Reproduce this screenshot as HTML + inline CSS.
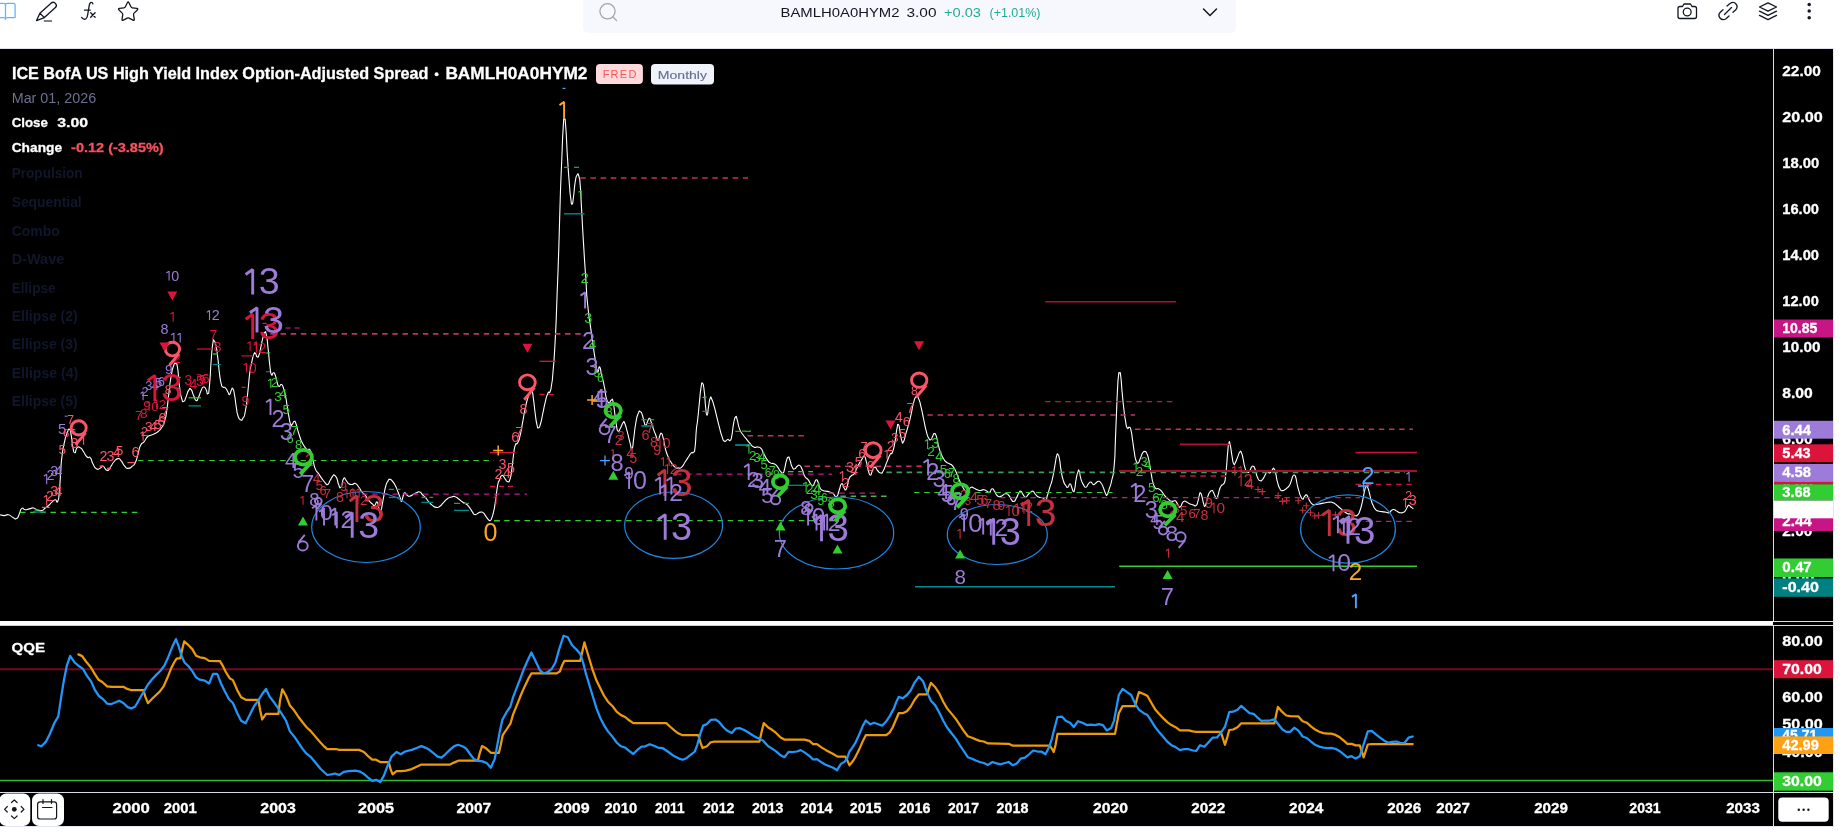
<!DOCTYPE html>
<html lang="en"><head><meta charset="utf-8"><title>BAMLH0A0HYM2 chart</title>
<style>html,body{margin:0;padding:0;background:#fff;overflow:hidden}body{width:1842px;height:836px;font-family:"Liberation Sans",sans-serif}svg{display:block;will-change:transform}</style></head>
<body>
<svg width="1842" height="836" viewBox="0 0 1842 836" font-family="'Liberation Sans', sans-serif">
<rect x="0" y="0" width="1842" height="836" fill="#ffffff"/>
<rect x="0" y="48" width="1833" height="1" fill="#dfe2ee"/>
<rect x="0" y="49" width="1833" height="777" fill="#000000"/>
<path d="M-3,3.4 H3.7 Q5.5,3.4 5.5,5.2 Q5.5,3.4 7.3,3.4 H13.6 Q15.1,3.4 15.1,4.9 V17.5 H7.5 Q5.7,17.6 5.5,19.3 Q5.3,17.6 3.5,17.5 H-3 M5.5,5.2 V19" fill="none" stroke="#5fb3f8" stroke-width="1.25" stroke-linejoin="round"/>
<g fill="none" stroke="#131722" stroke-width="1.3" stroke-linecap="round" stroke-linejoin="round"><path d="M36.6,20.6 L39.9,13.2 L51.3,2.9 Q53.6,1.4 55.6,3.6 Q57.4,5.8 55.4,7.6 L44.4,17.6 Z M39.9,13.2 L44.4,17.6"/></g><path d="M43.8,21 H52" stroke="#787b86" stroke-width="1.9" fill="none"/>
<g fill="none" stroke="#131722" stroke-width="1.3" stroke-linecap="round" stroke-linejoin="round"><path d="M81.6,17.4 Q83.6,20.2 86,18.8 Q87.3,17.8 87.8,14.2 L89.2,5.6 Q89.8,2.2 91.4,2.4 Q92.5,2.5 92.9,3.9 M84.5,10.2 H90.2 M90.7,12.8 L95.1,17.3 M95.1,12.8 L90.7,17.3"/></g>
<path d="M127.37,2.75 Q128.15,1.20 128.93,2.75 L130.93,6.75 Q131.38,7.65 132.38,7.80 L136.80,8.47 Q138.52,8.73 137.28,9.95 L134.10,13.09 Q133.38,13.80 133.55,14.80 L134.27,19.21 Q134.56,20.92 133.02,20.12 L129.05,18.06 Q128.15,17.60 127.25,18.06 L123.28,20.12 Q121.74,20.92 122.03,19.21 L122.75,14.80 Q122.92,13.80 122.20,13.09 L119.02,9.95 Q117.78,8.73 119.50,8.47 L123.92,7.80 Q124.92,7.65 125.37,6.75 Z" fill="none" stroke="#131722" stroke-width="1.3" stroke-linejoin="round"/>
<path d="M583,0 H1236 V27 Q1236,33 1230,33 H589 Q583,33 583,27 Z" fill="#f7f8fd"/>
<circle cx="607.5" cy="11.3" r="7.6" fill="none" stroke="#a3a6af" stroke-width="1.3"/><path d="M613,17 L616.5,20.5" stroke="#a3a6af" stroke-width="1.3" stroke-linecap="round"/>
<text x="780.5" y="17" font-size="13.5" fill="#131722" textLength="119" lengthAdjust="spacingAndGlyphs">BAMLH0A0HYM2</text>
<text x="906.5" y="17" font-size="13.5" fill="#131722" textLength="30" lengthAdjust="spacingAndGlyphs">3.00</text>
<text x="944" y="17" font-size="13.5" fill="#22ab94" textLength="37" lengthAdjust="spacingAndGlyphs">+0.03</text>
<text x="989.5" y="17" font-size="13.5" fill="#22ab94" textLength="51" lengthAdjust="spacingAndGlyphs">(+1.01%)</text>
<path d="M1203.5,9 L1210,15.5 L1216.5,9" fill="none" stroke="#131722" stroke-width="1.5" stroke-linecap="round" stroke-linejoin="round"/>
<g fill="none" stroke="#131722" stroke-width="1.3" stroke-linejoin="round"><path d="M1680,6.5 H1682.5 L1684,4 H1690.5 L1692,6.5 H1694.5 Q1696.5,6.5 1696.5,8.5 V16.5 Q1696.5,18.5 1694.5,18.5 H1680 Q1678,18.5 1678,16.5 V8.5 Q1678,6.5 1680,6.5 Z"/><circle cx="1687.2" cy="12" r="3.9"/></g>
<g fill="none" stroke="#131722" stroke-width="1.3" stroke-linecap="round"><path d="M1727,6 L1730,3.5 Q1733.5,1 1736,4 Q1738.5,7 1735.5,10 L1733,12.2"/><path d="M1729,16 L1726,18.7 Q1722.5,21 1720,18 Q1717.5,15 1720.5,12 L1723,9.8"/><path d="M1724.5,14.5 L1731.5,7.5"/></g>
<g fill="none" stroke="#131722" stroke-width="1.3" stroke-linejoin="round" stroke-linecap="round"><path d="M1768,2.8 L1776.5,7 L1768,11.2 L1759.5,7 Z"/><path d="M1759.5,11.2 L1768,15.4 L1776.5,11.2"/><path d="M1759.5,15.4 L1768,19.6 L1776.5,15.4"/></g>
<circle cx="1809.2" cy="4.6" r="1.75" fill="#131722"/>
<circle cx="1809.2" cy="11.1" r="1.75" fill="#131722"/>
<circle cx="1809.2" cy="17.7" r="1.75" fill="#131722"/>
<path d="M0.0,514.7C1.4,515.0 1.4,515.6 4.2,515.6C7.0,515.6 5.6,514.2 8.4,514.7C11.2,515.2 9.8,515.9 12.6,517.2C15.4,518.5 14.5,519.7 16.7,518.6C18.9,517.5 17.6,517.3 19.3,513.9C21.0,510.5 19.9,509.8 21.8,508.4C23.7,507.0 22.6,509.5 25.1,509.7C27.6,509.9 26.5,509.5 29.3,508.9C32.1,508.3 30.7,507.6 33.5,508.0C36.3,508.4 34.9,509.4 37.7,510.2C40.5,511.0 39.4,511.2 41.9,510.5C44.4,509.8 43.0,509.7 45.2,508.0C47.4,506.3 46.4,507.4 48.6,505.5C50.8,503.6 49.7,504.1 51.9,502.2C54.1,500.3 53.2,500.0 55.2,499.7C57.2,499.4 56.4,504.4 57.8,501.3C59.2,498.2 58.5,499.7 59.4,490.5C60.3,481.3 59.8,484.9 60.6,473.7C61.4,462.5 60.6,467.6 61.9,457.0C63.2,446.4 62.8,449.7 64.5,441.9C66.2,434.1 65.3,437.7 67.0,433.5C68.7,429.3 68.1,428.7 69.5,429.3C70.9,429.9 70.1,429.3 71.2,435.2C72.3,441.1 71.6,441.0 72.8,446.9C74.0,452.8 73.4,452.5 74.8,452.8C76.2,453.1 75.1,449.5 77.0,447.8C78.9,446.1 78.2,446.4 80.4,447.8C82.6,449.2 81.5,448.9 83.7,452.0C85.9,455.1 84.9,455.1 87.1,457.0C89.3,458.9 88.5,455.6 90.4,457.8C92.3,460.0 90.9,460.1 92.9,463.7C94.9,467.3 93.8,467.3 96.3,468.7C98.8,470.1 98.3,468.7 100.5,467.9C102.7,467.1 100.8,465.4 103.0,466.2C105.2,467.0 104.6,470.1 107.1,470.4C109.6,470.7 108.3,469.8 110.5,467.0C112.7,464.2 111.3,464.8 113.8,462.0C116.3,459.2 115.5,458.9 118.0,458.6C120.5,458.3 119.2,458.7 121.4,461.2C123.6,463.7 122.5,463.8 124.7,466.2C126.9,468.6 125.6,468.4 128.1,468.4C130.6,468.4 129.8,468.3 132.3,466.2C134.8,464.1 133.7,466.2 135.6,462.0C137.5,457.8 136.4,459.2 138.1,453.6C139.8,448.0 138.6,449.1 140.6,445.2C142.6,441.3 141.8,444.6 144.0,441.9C146.2,439.2 145.1,439.2 147.3,437.0C149.5,434.8 148.5,436.2 150.7,435.2C152.9,434.2 151.5,435.2 154.0,434.0C156.5,432.8 155.5,433.8 158.2,431.5C160.9,429.2 159.9,430.3 162.0,427.0C164.1,423.7 162.9,427.0 164.5,421.5C166.1,416.0 165.4,419.8 166.8,410.5C168.2,401.2 167.4,404.9 168.8,393.7C170.2,382.5 169.4,386.2 171.0,377.0C172.6,367.8 171.9,370.6 173.5,366.1C175.1,361.6 174.3,362.8 175.7,363.6C177.1,364.4 176.5,361.4 177.7,368.6C178.9,375.8 178.0,375.5 179.3,385.3C180.6,395.1 180.0,392.6 181.5,397.9C183.0,403.2 182.4,401.5 183.9,401.2C185.4,400.9 184.4,400.7 186.0,397.1C187.6,393.5 186.9,392.9 188.6,390.4C190.3,387.9 189.4,387.8 191.1,389.5C192.8,391.2 191.9,391.8 193.6,395.4C195.3,399.0 194.4,399.8 196.1,400.4C197.8,401.0 196.9,400.4 198.6,397.1C200.3,393.8 199.4,393.8 201.1,390.4C202.8,387.0 201.9,387.3 203.6,387.0C205.3,386.7 204.7,387.3 206.1,389.5C207.5,391.7 206.7,395.1 207.8,393.7C208.9,392.3 208.4,396.5 209.5,385.3C210.6,374.1 210.1,374.1 211.2,360.2C212.3,346.3 211.8,349.9 212.8,343.5C213.8,337.1 213.1,339.9 214.2,341.0C215.3,342.1 215.0,340.9 216.2,346.8C217.4,352.7 216.8,349.7 217.9,358.6C219.0,367.5 218.4,365.2 219.5,373.6C220.6,382.0 220.1,379.2 221.2,383.7C222.3,388.2 221.5,385.6 222.9,387.0C224.3,388.4 223.7,386.2 225.4,387.9C227.1,389.6 226.5,389.8 227.9,392.0C229.3,394.2 228.5,395.0 229.6,394.5C230.7,394.0 230.1,392.3 231.2,390.4C232.3,388.5 231.8,387.0 232.9,388.7C234.0,390.4 233.5,389.3 234.6,395.4C235.7,401.5 235.2,400.4 236.3,407.1C237.4,413.8 236.5,411.3 237.9,415.5C239.3,419.7 238.8,418.9 240.5,419.7C242.2,420.5 241.3,421.1 243.0,418.0C244.7,414.9 243.8,419.7 245.5,410.5C247.2,401.3 246.6,402.7 248.0,390.4C249.4,378.1 248.4,383.1 249.7,373.6C251.0,364.1 250.4,368.3 251.8,361.9C253.2,355.5 252.6,357.2 253.8,354.4C255.0,351.6 254.4,352.7 255.5,353.5C256.6,354.3 256.0,356.6 257.2,356.9C258.4,357.2 258.0,357.8 259.2,354.4C260.4,351.0 259.6,352.7 260.9,346.8C262.2,340.9 261.8,341.5 263.1,336.8C264.4,332.1 263.6,333.2 264.7,332.6C265.8,332.0 265.3,329.8 266.4,335.1C267.5,340.4 267.0,338.5 268.1,348.5C269.2,358.5 268.7,356.5 269.8,365.2C270.9,373.9 270.2,372.0 271.4,374.5C272.6,377.0 272.1,372.5 273.4,372.8C274.7,373.1 274.1,372.2 275.3,375.3C276.5,378.4 275.8,378.4 277.0,382.0C278.2,385.6 277.5,385.4 279.0,386.2C280.5,387.0 280.0,383.7 281.5,384.5C283.0,385.3 282.2,384.5 283.6,388.7C285.0,392.9 284.5,391.0 285.7,397.1C286.9,403.2 286.2,400.4 287.3,407.1C288.4,413.8 287.9,411.3 289.0,417.1C290.1,422.9 289.6,422.2 290.7,424.5C291.8,426.8 291.3,425.0 292.4,424.0C293.5,423.0 292.9,421.8 294.0,421.5C295.1,421.2 294.6,420.5 295.7,423.0C296.8,425.5 296.0,424.2 297.4,428.9C298.8,433.6 298.2,432.2 299.9,437.0C301.6,441.8 300.3,439.3 302.6,443.4C304.9,447.5 304.3,447.1 306.8,449.3C309.3,451.5 308.2,447.0 310.1,450.1C312.0,453.2 310.9,452.3 312.6,458.5C314.3,464.7 313.2,463.6 315.2,468.6C317.2,473.6 316.3,470.3 318.5,473.6C320.7,476.9 319.7,475.5 321.9,478.6C324.1,481.7 323.3,480.8 325.2,482.8C327.1,484.8 326.0,485.3 327.7,484.5C329.4,483.7 328.5,483.1 330.2,480.3C331.9,477.5 331.3,477.8 332.7,476.1C334.1,474.4 333.0,474.4 334.4,475.2C335.8,476.0 335.5,475.5 336.9,478.6C338.3,481.7 337.2,481.7 338.6,484.5C340.0,487.3 339.4,489.0 341.1,487.0C342.8,485.0 341.9,480.8 343.6,478.6C345.3,476.4 344.4,478.6 346.1,480.3C347.8,482.0 346.6,482.2 348.6,483.6C350.6,485.0 349.8,484.5 352.0,484.5C354.2,484.5 353.1,482.8 355.3,483.6C357.5,484.4 356.5,484.2 358.7,487.0C360.9,489.8 359.8,489.2 362.0,492.0C364.2,494.8 363.2,492.5 365.4,495.3C367.6,498.1 366.5,497.6 368.7,500.4C370.9,503.2 370.1,502.0 372.1,503.7C374.1,505.4 372.9,506.0 374.6,505.4C376.3,504.8 375.7,501.2 377.1,502.0C378.5,502.8 377.7,504.5 378.8,507.9C379.9,511.3 379.1,514.6 380.5,512.1C381.9,509.6 381.3,508.8 383.0,500.4C384.7,492.0 383.8,493.4 385.5,487.0C387.2,480.6 386.5,483.6 388.0,481.1C389.5,478.6 388.3,479.1 390.0,479.4C391.7,479.7 391.2,479.7 393.0,481.9C394.8,484.1 393.8,482.7 395.5,486.1C397.2,489.5 396.3,487.8 398.0,492.0C399.7,496.2 399.3,495.6 400.5,498.7C401.7,501.8 400.8,502.0 401.7,501.2C402.6,500.4 402.1,499.0 403.1,496.2C404.1,493.4 403.3,493.1 404.7,492.8C406.1,492.5 405.5,494.2 407.2,495.3C408.9,496.4 407.7,496.5 409.7,496.2C411.7,495.9 410.9,495.6 413.1,494.5C415.3,493.4 414.2,493.6 416.4,492.8C418.6,492.0 417.8,491.4 419.8,492.0C421.8,492.6 420.3,492.5 422.3,494.5C424.3,496.5 423.5,495.4 425.7,497.9C427.9,500.4 426.8,499.5 429.0,502.0C431.2,504.5 429.9,503.6 432.4,505.4C434.9,507.2 434.0,507.1 436.5,507.4C439.0,507.7 437.7,507.7 439.9,506.2C442.1,504.7 440.7,505.4 443.2,502.9C445.7,500.4 444.6,500.7 447.4,498.7C450.2,496.7 449.1,497.7 451.6,497.0C454.1,496.3 452.8,496.1 455.0,496.7C457.2,497.3 455.8,496.9 458.3,498.7C460.8,500.5 460.0,500.3 462.5,502.0C465.0,503.7 463.6,502.0 465.8,503.7C468.0,505.4 467.0,504.3 469.2,507.1C471.4,509.9 470.6,509.6 472.5,512.1C474.4,514.6 473.0,514.3 475.0,514.6C477.0,514.9 476.4,513.7 478.4,512.9C480.4,512.1 479.2,512.1 480.9,512.1C482.6,512.1 481.7,511.5 483.4,512.9C485.1,514.3 484.2,514.1 485.9,516.3C487.6,518.5 487.0,518.2 488.4,519.6C489.8,521.0 489.0,521.1 490.1,520.5C491.2,519.9 490.7,520.7 491.8,517.9C492.9,515.1 492.4,516.8 493.5,512.1C494.6,507.4 494.1,510.1 495.1,503.7C496.1,497.3 495.5,499.7 496.5,493.0C497.5,486.3 497.1,487.8 498.0,483.6C498.9,479.4 498.0,483.2 499.3,480.5C500.6,477.8 499.9,476.0 501.8,475.4C503.7,474.8 503.2,476.7 505.1,478.8C507.0,480.9 505.9,481.6 507.6,481.6C509.3,481.6 508.6,483.6 510.1,478.8C511.6,474.0 511.0,474.9 512.1,467.1C513.2,459.3 512.5,462.6 513.5,455.3C514.5,448.0 513.8,449.5 515.2,445.3C516.6,441.1 516.0,446.2 517.7,442.8C519.4,439.4 518.5,442.2 520.2,435.2C521.9,428.2 521.0,430.8 522.7,421.9C524.4,413.0 523.5,416.3 525.2,408.5C526.9,400.7 526.0,404.0 527.7,398.4C529.4,392.8 528.8,394.5 530.2,391.7C531.6,388.9 530.8,387.2 531.9,390.0C533.0,392.8 532.5,392.3 533.6,400.1C534.7,407.9 534.1,405.4 535.2,413.5C536.3,421.6 535.8,419.7 536.9,424.4C538.0,429.1 537.4,428.0 538.6,427.7C539.8,427.4 539.2,428.2 540.6,423.5C542.0,418.8 541.2,420.7 542.8,413.5C544.4,406.3 543.6,408.5 545.3,401.8C547.0,395.1 546.2,396.8 547.8,393.4C549.4,390.0 548.7,394.8 550.0,391.7C551.3,388.6 550.7,390.6 551.7,384.0C552.7,377.4 551.8,386.6 553.0,372.0C554.2,357.4 553.8,366.2 555.2,340.3C556.6,314.4 555.9,326.2 557.1,294.4C558.3,262.6 557.9,276.5 558.9,245.0C559.9,213.5 559.3,227.6 560.2,199.8C561.1,172.0 560.7,185.2 561.7,161.6C562.7,138.0 562.2,143.2 563.1,129.0C564.0,114.8 563.5,119.1 564.4,119.1C565.3,119.1 564.9,116.1 565.9,129.0C566.9,141.9 566.3,139.2 567.5,157.7C568.7,176.2 568.3,171.1 569.4,184.5C570.5,197.9 569.8,191.4 570.7,197.9C571.6,204.4 571.1,204.6 572.1,204.0C573.1,203.4 572.6,203.1 573.6,196.0C574.6,188.9 574.0,189.5 575.1,182.6C576.2,175.7 575.7,177.3 577.0,175.3C578.3,173.3 577.8,172.8 578.9,176.5C580.0,180.2 579.4,175.4 580.3,186.4C581.2,197.4 580.6,192.2 581.6,209.4C582.6,226.6 581.8,214.9 583.2,238.1C584.6,261.3 584.3,256.4 585.8,279.0C587.3,301.6 586.1,289.2 587.8,305.8C589.5,322.4 588.5,312.2 590.8,328.8C593.1,345.4 592.4,341.6 594.6,355.6C596.8,369.6 595.6,367.1 597.3,370.9C599.0,374.7 598.2,365.7 599.6,367.0C601.0,368.3 600.3,370.0 601.5,374.7C602.7,379.4 602.0,376.4 603.1,381.0C604.2,385.6 603.6,382.6 604.7,388.4C605.8,394.2 605.0,393.7 606.4,398.4C607.8,403.1 607.2,402.0 608.9,402.6C610.6,403.2 610.0,400.4 611.4,400.1C612.8,399.8 612.0,397.3 613.1,401.8C614.2,406.3 613.7,405.7 614.8,413.5C615.9,421.3 615.3,419.3 616.4,425.2C617.5,431.1 616.7,430.3 618.1,431.1C619.5,431.9 618.9,430.5 620.6,427.7C622.3,424.9 621.7,424.1 623.1,422.7C624.5,421.3 623.4,420.4 624.8,423.5C626.2,426.6 625.6,425.8 627.3,431.9C629.0,438.0 628.2,436.3 629.8,441.9C631.4,447.5 630.7,449.7 632.0,448.6C633.3,447.5 632.5,447.0 633.7,438.6C634.9,430.2 634.2,431.9 635.7,423.5C637.2,415.1 636.6,417.4 638.2,413.5C639.8,409.6 639.0,411.2 640.4,411.8C641.8,412.4 641.2,411.8 642.4,415.2C643.6,418.6 643.0,418.6 644.1,421.9C645.2,425.2 644.6,425.2 645.7,425.2C646.8,425.2 646.3,424.1 647.4,421.9C648.5,419.7 648.0,418.8 649.1,418.5C650.2,418.2 649.4,417.6 650.8,421.0C652.2,424.4 651.6,423.9 653.3,428.6C655.0,433.3 654.2,431.3 655.8,435.2C657.4,439.1 656.6,440.3 658.0,440.3C659.4,440.3 658.8,437.4 660.0,435.2C661.2,433.0 660.5,432.5 661.6,433.6C662.7,434.7 662.2,434.1 663.3,438.6C664.4,443.1 663.6,441.4 665.0,447.0C666.4,452.6 665.5,450.3 667.5,455.3C669.5,460.3 668.4,458.1 670.9,462.0C673.4,465.9 672.5,465.1 675.0,467.1C677.5,469.1 676.2,467.9 678.4,467.9C680.6,467.9 679.5,469.1 681.7,467.1C683.9,465.1 682.9,465.4 685.1,462.0C687.3,458.6 686.3,460.1 688.4,457.0C690.5,453.9 689.6,454.4 691.3,452.8C693.0,451.2 692.2,454.2 693.5,452.3C694.8,450.4 694.2,454.4 695.1,447.0C696.0,439.6 695.5,439.1 696.3,430.2C697.1,421.3 696.6,429.1 697.6,420.2C698.6,411.3 698.2,414.1 699.3,403.5C700.4,392.9 699.8,395.1 700.9,388.4C702.0,381.7 701.5,382.3 702.6,383.4C703.7,384.5 703.3,384.0 704.3,391.8C705.3,399.6 704.7,399.0 705.6,406.8C706.5,414.6 706.1,415.2 707.1,415.2C708.1,415.2 707.5,412.4 708.5,406.8C709.5,401.2 709.0,401.0 710.1,398.5C711.2,396.0 710.4,396.5 711.8,399.3C713.2,402.1 712.6,400.9 714.3,406.8C716.0,412.7 715.1,410.2 716.8,416.9C718.5,423.6 717.6,420.5 719.3,426.9C721.0,433.3 720.2,431.3 721.9,436.1C723.6,440.9 722.5,440.1 724.4,441.2C726.3,442.3 725.8,439.8 727.7,439.5C729.6,439.2 728.8,441.7 730.2,440.3C731.6,438.9 730.8,440.9 731.9,435.3C733.0,429.7 732.4,429.7 733.6,423.6C734.8,417.5 734.4,418.0 735.6,416.9C736.8,415.8 736.0,416.3 737.3,420.2C738.6,424.1 737.6,423.8 739.4,428.6C741.2,433.4 740.6,431.2 742.8,434.5C745.0,437.8 743.9,435.8 746.1,438.6C748.3,441.4 747.0,440.0 749.5,442.8C752.0,445.6 750.9,445.6 753.7,447.0C756.5,448.4 755.4,446.4 757.9,447.0C760.4,447.6 759.3,446.5 761.2,448.7C763.1,450.9 761.7,450.1 763.7,453.7C765.7,457.3 764.9,456.5 767.1,459.6C769.3,462.7 768.2,461.5 770.4,462.9C772.6,464.3 771.6,462.7 773.8,463.8C776.0,464.9 774.9,463.8 777.1,466.3C779.3,468.8 778.5,469.1 780.5,471.3C782.5,473.5 781.6,473.8 783.0,473.0C784.4,472.2 783.5,472.7 784.6,468.8C785.7,464.9 785.1,465.1 786.3,461.2C787.5,457.3 787.1,457.4 788.3,457.1C789.5,456.8 788.7,457.1 790.0,460.4C791.3,463.7 790.6,464.3 792.2,467.1C793.8,469.9 793.0,469.1 794.7,468.8C796.4,468.5 795.5,467.4 797.2,466.3C798.9,465.2 798.0,464.3 799.7,465.4C801.4,466.5 800.5,466.0 802.2,469.6C803.9,473.2 802.7,472.9 804.7,476.3C806.7,479.7 806.1,477.2 808.1,479.7C810.1,482.2 808.9,481.9 810.6,483.8C812.3,485.7 811.7,486.0 813.1,485.5C814.5,485.0 813.7,484.1 814.8,482.2C815.9,480.3 815.3,479.7 816.4,479.7C817.5,479.7 817.0,479.7 818.1,482.2C819.2,484.7 818.4,484.5 819.8,487.2C821.2,489.9 819.8,488.8 822.3,490.2C824.8,491.6 823.9,490.4 827.3,491.4C830.7,492.4 829.3,491.4 832.4,493.1C835.5,494.8 834.3,497.3 836.5,496.4C838.7,495.5 837.4,494.7 839.1,490.5C840.8,486.3 839.9,484.6 841.6,483.8C843.3,483.0 842.7,486.0 844.1,488.0C845.5,490.0 844.6,490.5 845.7,489.7C846.8,488.9 846.3,489.1 847.4,485.5C848.5,481.9 847.7,482.1 849.1,478.8C850.5,475.5 849.9,477.2 851.6,475.5C853.3,473.8 852.4,476.0 854.1,473.8C855.8,471.6 854.9,472.1 856.6,468.8C858.3,465.5 857.4,466.9 859.1,463.8C860.8,460.7 860.0,462.1 861.7,459.6C863.4,457.1 862.7,455.7 864.2,456.2C865.7,456.7 864.8,456.4 866.2,461.2C867.6,466.0 866.9,465.9 868.3,470.5C869.7,475.1 869.0,475.1 870.4,475.1C871.8,475.1 871.0,473.2 872.5,470.5C874.0,467.8 873.3,467.1 875.0,467.1C876.7,467.1 875.6,468.5 877.6,470.5C879.6,472.5 879.0,473.0 880.9,473.0C882.8,473.0 881.4,474.1 883.4,470.5C885.4,466.9 884.6,467.4 886.8,462.1C889.0,456.8 888.2,457.9 890.1,454.5C892.0,451.1 890.9,456.2 892.5,452.0C894.1,447.8 893.6,449.2 895.0,441.9C896.4,434.6 895.6,436.0 896.7,430.2C897.8,424.4 897.3,423.8 898.4,424.4C899.5,425.0 898.9,426.6 900.0,431.9C901.1,437.2 900.6,437.0 901.7,440.3C902.8,443.6 902.0,444.1 903.4,441.9C904.8,439.7 904.2,439.2 905.9,433.6C907.6,428.0 906.7,431.3 908.4,425.2C910.1,419.1 909.2,422.5 910.9,415.2C912.6,407.9 911.7,409.6 913.4,403.4C915.1,397.2 914.3,398.4 916.0,396.7C917.7,395.0 916.8,395.0 918.5,398.4C920.2,401.8 919.3,400.1 921.0,406.8C922.7,413.5 921.8,410.7 923.5,418.5C925.2,426.3 924.3,423.8 926.0,430.2C927.7,436.6 926.8,434.7 928.5,437.8C930.2,440.9 929.6,440.0 931.0,439.4C932.4,438.8 931.6,438.0 932.7,436.1C933.8,434.2 933.1,433.3 934.4,433.6C935.7,433.9 935.1,432.7 936.5,436.9C937.9,441.1 937.1,440.5 938.6,446.1C940.1,451.7 939.4,449.5 941.1,453.7C942.8,457.9 941.9,455.9 943.6,458.7C945.3,461.5 944.2,460.3 946.1,462.0C948.0,463.7 947.2,462.3 949.4,463.7C951.6,465.1 950.6,463.4 952.8,466.2C955.0,469.0 953.9,467.3 956.1,472.1C958.3,476.9 957.3,475.5 959.5,480.5C961.7,485.5 960.6,483.6 962.8,487.2C965.0,490.8 964.2,490.5 966.2,491.3C968.2,492.1 967.0,491.1 968.7,489.7C970.4,488.3 969.5,487.8 971.2,487.2C972.9,486.6 971.7,487.2 973.7,488.0C975.7,488.8 974.9,488.9 977.1,489.7C979.3,490.5 978.2,490.5 980.4,490.5C982.6,490.5 981.6,489.4 983.8,489.7C986.0,490.0 985.2,490.5 987.1,491.3C989.0,492.1 987.9,493.0 989.6,492.2C991.3,491.4 990.4,489.1 992.1,488.8C993.8,488.5 992.9,489.1 994.6,491.3C996.3,493.5 995.1,493.8 997.1,495.5C999.1,497.2 997.7,497.0 1000.5,496.4C1003.3,495.8 1002.7,494.1 1005.5,493.8C1008.3,493.5 1006.9,493.5 1008.9,495.5C1010.9,497.5 1009.7,497.7 1011.4,499.7C1013.1,501.7 1012.2,502.0 1013.9,501.4C1015.6,500.8 1014.7,500.8 1016.4,498.0C1018.1,495.2 1017.4,495.2 1018.9,493.0C1020.4,490.8 1019.5,490.7 1020.9,491.3C1022.3,491.9 1021.5,492.7 1023.1,494.7C1024.7,496.7 1023.9,497.2 1025.6,497.2C1027.3,497.2 1026.4,496.4 1028.1,494.7C1029.8,493.0 1028.9,493.3 1030.6,492.2C1032.3,491.1 1031.4,490.5 1033.1,491.3C1034.8,492.1 1033.7,492.7 1035.7,494.7C1037.7,496.7 1036.8,496.2 1039.0,497.2C1041.2,498.2 1040.2,496.9 1042.4,497.7C1044.6,498.5 1044.0,500.4 1045.7,499.7C1047.4,499.0 1046.0,499.7 1047.4,495.5C1048.8,491.3 1048.2,492.8 1049.9,487.2C1051.6,481.6 1050.7,486.1 1052.4,478.8C1054.1,471.5 1053.5,472.9 1054.9,465.4C1056.3,457.9 1055.6,459.8 1056.6,456.2C1057.6,452.6 1057.0,453.7 1057.9,454.5C1058.8,455.3 1058.3,453.4 1059.4,458.7C1060.5,464.0 1059.8,463.1 1061.1,470.4C1062.4,477.7 1061.7,475.5 1063.3,480.5C1064.9,485.5 1064.3,483.3 1065.8,485.5C1067.3,487.7 1066.4,487.8 1067.8,487.2C1069.2,486.6 1068.7,483.8 1070.0,483.8C1071.3,483.8 1070.6,484.7 1071.7,487.2C1072.8,489.7 1072.3,490.8 1073.3,491.3C1074.3,491.8 1073.7,493.0 1074.7,488.8C1075.7,484.6 1075.1,484.4 1076.2,478.8C1077.3,473.2 1076.9,474.6 1077.9,472.1C1078.9,469.6 1078.2,469.0 1079.2,471.2C1080.2,473.4 1079.5,474.3 1080.9,478.8C1082.3,483.3 1081.7,481.8 1083.4,484.6C1085.1,487.4 1084.2,487.5 1085.9,487.2C1087.6,486.9 1086.7,485.5 1088.4,483.8C1090.1,482.1 1089.2,481.8 1090.9,482.1C1092.6,482.4 1091.7,484.3 1093.4,484.6C1095.1,484.9 1094.2,484.1 1095.9,483.0C1097.6,481.9 1096.7,481.3 1098.4,481.3C1100.1,481.3 1099.3,480.8 1101.0,483.0C1102.7,485.2 1102.0,484.5 1103.5,488.0C1105.0,491.5 1104.3,491.3 1105.5,493.5C1106.7,495.7 1106.0,496.2 1107.2,494.7C1108.4,493.2 1107.7,493.6 1109.2,488.9C1110.7,484.2 1110.0,488.3 1111.7,480.5C1113.4,472.7 1113.0,478.9 1114.2,465.5C1115.4,452.1 1114.7,457.1 1115.4,440.3C1116.1,423.5 1115.7,431.4 1116.4,415.2C1117.1,399.0 1116.7,404.6 1117.4,391.8C1118.1,379.0 1117.7,383.0 1118.4,376.7C1119.1,370.4 1118.8,373.0 1119.6,373.0C1120.4,373.0 1120.0,370.4 1120.8,376.7C1121.6,383.0 1121.1,381.2 1122.1,391.8C1123.1,402.4 1122.7,399.0 1123.8,408.5C1124.9,418.0 1124.3,413.8 1125.4,420.2C1126.5,426.6 1125.8,425.4 1127.1,427.8C1128.4,430.2 1128.0,426.5 1129.3,427.3C1130.6,428.1 1129.9,426.0 1131.0,430.3C1132.1,434.6 1131.5,433.0 1132.6,440.3C1133.7,447.6 1133.2,445.4 1134.3,452.1C1135.4,458.8 1134.7,456.8 1136.0,460.4C1137.3,464.0 1136.8,463.4 1138.2,462.9C1139.6,462.4 1138.7,462.1 1140.2,458.8C1141.7,455.5 1141.1,455.3 1142.7,452.9C1144.3,450.5 1143.5,451.3 1144.9,451.6C1146.3,451.9 1145.6,450.8 1146.9,453.7C1148.2,456.6 1147.8,455.5 1148.9,460.4C1150.0,465.3 1149.4,463.5 1150.3,468.5C1151.2,473.5 1150.6,470.7 1151.5,475.4C1152.4,480.1 1151.7,478.5 1153.0,482.7C1154.3,486.9 1153.6,486.1 1155.4,488.1C1157.2,490.1 1156.4,487.7 1158.4,488.7C1160.4,489.7 1159.4,488.9 1161.4,491.1C1163.4,493.3 1162.2,492.7 1164.4,495.3C1166.6,497.9 1165.6,496.9 1168.0,498.9C1170.4,500.9 1169.3,500.7 1171.5,501.3C1173.7,501.9 1172.9,500.5 1174.5,500.7C1176.1,500.9 1174.9,500.1 1176.3,501.9C1177.7,503.7 1177.3,504.5 1178.7,506.1C1180.1,507.7 1179.3,507.7 1180.5,506.7C1181.7,505.7 1181.1,504.9 1182.3,503.1C1183.5,501.3 1182.7,501.7 1184.1,501.3C1185.5,500.9 1184.7,501.1 1186.5,501.9C1188.3,502.7 1187.3,502.7 1189.5,503.7C1191.7,504.7 1190.9,504.3 1193.1,504.9C1195.3,505.5 1194.5,506.7 1196.1,505.5C1197.7,504.3 1196.8,504.7 1197.9,501.3C1199.0,497.9 1198.4,498.1 1199.3,495.3C1200.2,492.5 1199.6,492.3 1200.5,492.9C1201.4,493.5 1201.1,493.5 1202.1,497.1C1203.1,500.7 1202.6,500.7 1203.6,503.7C1204.6,506.7 1204.0,506.7 1205.0,506.1C1206.0,505.5 1205.5,505.3 1206.5,501.9C1207.5,498.5 1206.9,499.1 1208.0,495.9C1209.1,492.7 1208.5,494.1 1209.8,492.3C1211.1,490.5 1210.8,490.5 1212.0,490.5C1213.2,490.5 1212.3,490.3 1213.4,492.3C1214.5,494.3 1214.1,494.5 1215.2,496.5C1216.3,498.5 1215.8,498.9 1216.8,498.3C1217.8,497.7 1217.3,497.5 1218.2,494.7C1219.1,491.9 1218.4,492.9 1219.4,489.9C1220.4,486.9 1220.0,487.5 1221.2,485.7C1222.4,483.9 1221.8,485.9 1223.0,484.5C1224.2,483.1 1223.9,484.5 1224.8,481.5C1225.7,478.5 1225.0,480.8 1225.6,475.6C1226.2,470.4 1225.9,473.8 1226.6,466.0C1227.3,458.2 1226.9,459.8 1227.7,452.1C1228.5,444.4 1228.0,445.1 1228.9,442.9C1229.8,440.7 1229.3,441.2 1230.3,445.4C1231.3,449.6 1230.8,449.3 1231.9,455.4C1233.0,461.5 1232.4,461.6 1233.6,463.8C1234.8,466.0 1234.3,464.3 1235.6,462.1C1236.9,459.9 1236.2,460.4 1237.6,457.1C1239.0,453.8 1238.5,453.5 1239.8,452.1C1241.1,450.7 1240.4,450.7 1241.5,452.9C1242.6,455.1 1242.0,454.1 1243.1,458.8C1244.2,463.5 1243.4,462.7 1244.8,467.1C1246.2,471.5 1245.6,471.0 1247.3,472.1C1249.0,473.2 1248.4,472.2 1249.8,470.5C1251.2,468.8 1250.4,468.5 1251.5,467.1C1252.6,465.7 1252.1,465.7 1253.2,466.3C1254.3,466.9 1253.5,465.2 1254.9,468.8C1256.3,472.4 1255.7,473.3 1257.4,477.2C1259.1,481.1 1258.2,479.7 1259.9,480.5C1261.6,481.3 1260.7,481.4 1262.4,479.7C1264.1,478.0 1263.2,478.3 1264.9,475.5C1266.6,472.7 1265.7,472.1 1267.4,471.3C1269.1,470.5 1268.2,473.6 1269.9,473.0C1271.6,472.4 1271.0,471.0 1272.4,469.6C1273.8,468.2 1273.0,467.4 1274.1,468.8C1275.2,470.2 1274.7,469.3 1275.8,473.8C1276.9,478.3 1276.1,477.2 1277.5,482.2C1278.9,487.2 1278.3,486.1 1280.0,488.9C1281.7,491.7 1280.8,490.4 1282.5,490.6C1284.2,490.8 1283.4,490.5 1285.0,489.5C1286.6,488.5 1285.8,489.3 1287.4,487.7C1289.0,486.1 1288.4,487.3 1289.8,484.7C1291.2,482.1 1290.6,482.7 1291.6,479.9C1292.6,477.1 1291.9,477.9 1292.8,476.3C1293.7,474.7 1293.3,474.7 1294.3,475.1C1295.3,475.5 1294.9,474.7 1295.8,477.5C1296.7,480.3 1296.0,479.1 1297.0,483.5C1298.0,487.9 1297.6,486.5 1298.8,490.7C1300.0,494.9 1299.3,493.3 1300.6,496.1C1301.9,498.9 1301.4,498.9 1302.7,499.1C1304.0,499.3 1303.2,498.1 1304.4,496.7C1305.6,495.3 1305.1,494.7 1306.3,494.9C1307.5,495.1 1306.7,495.1 1308.0,497.3C1309.3,499.5 1308.4,499.1 1310.1,501.5C1311.8,503.9 1311.1,503.4 1313.1,504.4C1315.1,505.4 1313.5,504.7 1316.1,504.4C1318.7,504.1 1317.7,504.2 1320.9,503.6C1324.1,503.0 1322.7,503.2 1325.7,502.7C1328.7,502.2 1327.5,502.1 1329.9,502.1C1332.3,502.1 1330.7,501.7 1332.9,502.7C1335.1,503.7 1334.1,503.2 1336.5,505.0C1338.9,506.8 1337.6,506.0 1340.0,508.0C1342.4,510.0 1341.2,509.2 1343.6,511.0C1346.0,512.8 1345.0,512.4 1347.2,513.4C1349.4,514.4 1348.2,513.6 1350.2,514.0C1352.2,514.4 1351.4,514.0 1353.2,514.6C1355.0,515.2 1354.0,515.8 1355.6,515.8C1357.2,515.8 1356.6,516.2 1358.0,514.6C1359.4,513.0 1358.6,514.2 1359.8,511.0C1361.0,507.8 1360.4,509.8 1361.6,505.0C1362.8,500.2 1362.3,501.9 1363.4,496.7C1364.5,491.5 1363.9,492.9 1364.9,489.5C1365.9,486.1 1365.4,487.1 1366.4,486.5C1367.4,485.9 1366.8,485.5 1367.8,487.7C1368.8,489.9 1368.3,488.9 1369.4,493.1C1370.5,497.3 1370.0,496.3 1371.2,500.3C1372.4,504.3 1371.6,502.0 1373.0,505.0C1374.4,508.0 1373.5,507.2 1375.3,509.2C1377.1,511.2 1376.1,510.2 1378.3,511.0C1380.5,511.8 1379.3,511.2 1381.9,511.6C1384.5,512.0 1383.7,511.8 1386.1,512.2C1388.5,512.6 1387.5,513.2 1389.1,512.8C1390.7,512.4 1389.5,512.1 1390.9,511.0C1392.3,509.9 1391.7,509.7 1393.3,509.5C1394.9,509.3 1394.1,509.6 1395.7,510.4C1397.3,511.2 1396.5,511.2 1398.1,512.0C1399.7,512.8 1398.7,512.7 1400.5,512.8C1402.3,512.9 1401.7,513.2 1403.5,512.2C1405.3,511.2 1404.5,511.8 1405.9,509.8C1407.3,507.8 1406.7,507.7 1407.7,506.2C1408.7,504.7 1407.9,505.1 1408.9,505.3C1409.9,505.5 1409.3,505.7 1410.7,506.8C1412.1,507.9 1412.2,508.0 1413.0,508.6" fill="none" stroke="#ffffff" stroke-width="1.1" stroke-linejoin="round" stroke-linecap="round"/>
<line x1="20" y1="512.4" x2="140" y2="512.4" stroke="#32cd32" stroke-width="1.15" stroke-dasharray="5.5,4.66"/>
<line x1="138" y1="460.5" x2="494" y2="460.5" stroke="#32cd32" stroke-width="1.15" stroke-dasharray="5.5,4.66"/>
<line x1="494" y1="520.6" x2="837" y2="520.6" stroke="#32cd32" stroke-width="1.15" stroke-dasharray="5.5,4.66"/>
<line x1="270.4" y1="333.9" x2="583" y2="333.9" stroke="#bd3269" stroke-width="1.65" stroke-dasharray="5.5,4.66"/>
<line x1="285.5" y1="328" x2="303" y2="328" stroke="#8b1a6b" stroke-width="1.6" stroke-dasharray="5,4"/>
<line x1="580.3" y1="178" x2="748" y2="178" stroke="#bd3269" stroke-width="1.65" stroke-dasharray="5.5,4.66"/>
<line x1="747.5" y1="435.7" x2="804.3" y2="435.7" stroke="#bd3269" stroke-width="1.65" stroke-dasharray="5.5,4.66"/>
<line x1="804.5" y1="466.2" x2="922" y2="466.2" stroke="#bd3269" stroke-width="1.65" stroke-dasharray="5.5,4.66"/>
<line x1="927.4" y1="415" x2="1135" y2="415" stroke="#bd3269" stroke-width="1.65" stroke-dasharray="5.5,4.66"/>
<line x1="1135" y1="429.2" x2="1413" y2="429.2" stroke="#bd3269" stroke-width="1.65" stroke-dasharray="5.5,4.66"/>
<line x1="1045" y1="401.6" x2="1174" y2="401.6" stroke="#c01840" stroke-width="1.4" stroke-dasharray="5.5,4.66"/>
<line x1="886.3" y1="472.4" x2="1405" y2="472.4" stroke="#3f9a52" stroke-width="1.9" stroke-dasharray="5.5,4.66"/>
<line x1="1045.3" y1="301.7" x2="1176" y2="301.7" stroke="#ad1034" stroke-width="1.6"/>
<line x1="1180" y1="444.4" x2="1229.3" y2="444.4" stroke="#ad1034" stroke-width="1.6"/>
<line x1="1119" y1="470.95" x2="1417" y2="470.95" stroke="#a50f2d" stroke-width="2.0"/>
<line x1="1355.5" y1="452.4" x2="1417" y2="452.4" stroke="#c8143c" stroke-width="1.5"/>
<line x1="1180" y1="476" x2="1226" y2="476" stroke="#8f1030" stroke-width="1.9" stroke-dasharray="5.5,4.66"/>
<line x1="1355.5" y1="484.4" x2="1412" y2="484.4" stroke="#c01840" stroke-width="1.4" stroke-dasharray="5.5,4.66"/>
<line x1="914" y1="492.5" x2="1114" y2="492.5" stroke="#32cd32" stroke-width="1.15" stroke-dasharray="5.5,4.66"/>
<line x1="788" y1="471.6" x2="813" y2="471.6" stroke="#32cd32" stroke-width="1.15" stroke-dasharray="5.5,4.66"/>
<line x1="840.4" y1="496.3" x2="887" y2="496.3" stroke="#4fae4f" stroke-width="1.6" stroke-dasharray="5.5,4.66"/>
<line x1="362" y1="494.2" x2="527" y2="494.2" stroke="#c2188c" stroke-width="1.2" stroke-dasharray="5.5,4.66"/>
<line x1="676" y1="474.1" x2="832" y2="474.1" stroke="#c2188c" stroke-width="1.3" stroke-dasharray="5.5,4.66"/>
<line x1="829" y1="493.2" x2="875" y2="493.2" stroke="#c2188c" stroke-width="1.2" stroke-dasharray="5.5,4.66"/>
<line x1="1000" y1="497.6" x2="1360" y2="497.6" stroke="#c2188c" stroke-width="1.4" stroke-dasharray="5.5,4.66"/>
<line x1="1355.5" y1="521.4" x2="1412" y2="521.4" stroke="#c2188c" stroke-width="1.3" stroke-dasharray="5.5,4.66"/>
<line x1="1119.2" y1="566.3" x2="1417" y2="566.3" stroke="#32cd32" stroke-width="1.4"/>
<line x1="915" y1="586.7" x2="1115" y2="586.7" stroke="#008b8b" stroke-width="1.4"/>
<ellipse cx="366" cy="527" rx="54.3" ry="35.5" fill="none" stroke="#1e88e5" stroke-width="1.2"/>
<ellipse cx="673.6" cy="525.2" rx="48.9" ry="33.2" fill="none" stroke="#1e88e5" stroke-width="1.2"/>
<ellipse cx="836.5" cy="533" rx="57.2" ry="36" fill="none" stroke="#1e88e5" stroke-width="1.2"/>
<ellipse cx="997.3" cy="534.5" rx="50" ry="30" fill="none" stroke="#1e88e5" stroke-width="1.2"/>
<ellipse cx="1348" cy="529" rx="47.4" ry="34.2" fill="none" stroke="#1e88e5" stroke-width="1.2"/>
<line x1="99.7" y1="466.3" x2="103.7" y2="466.3" stroke="#fb5569" stroke-width="1.6"/>
<line x1="107" y1="468.5" x2="111" y2="468.5" stroke="#fb5569" stroke-width="1.6"/>
<line x1="127.4" y1="462.6" x2="135.3" y2="462.6" stroke="#fb5569" stroke-width="1.2"/>
<line x1="41.8" y1="507.4" x2="49.7" y2="507.4" stroke="#fb5569" stroke-width="1.2"/>
<line x1="71.4" y1="429.7" x2="75.4" y2="429.7" stroke="#32cd32" stroke-width="1.2"/>
<line x1="71.4" y1="431.7" x2="75.4" y2="431.7" stroke="#008b8b" stroke-width="1.2"/>
<line x1="33" y1="512" x2="46" y2="512" stroke="#008b8b" stroke-width="1.3"/>
<line x1="34.5" y1="510" x2="39.5" y2="510" stroke="#32cd32" stroke-width="1.2"/>
<line x1="64.7" y1="416.2" x2="67.7" y2="416.2" stroke="#9d7bd8" stroke-width="1"/>
<line x1="197" y1="349" x2="212.2" y2="349" stroke="#a01030" stroke-width="1.6"/>
<line x1="213" y1="354" x2="218" y2="354" stroke="#32cd32" stroke-width="1.3"/>
<line x1="212.8" y1="364.5" x2="220.8" y2="364.5" stroke="#008b8b" stroke-width="1.2"/>
<line x1="177.8" y1="377.4" x2="180.8" y2="377.4" stroke="#32cd32" stroke-width="1.2"/>
<line x1="177.8" y1="387.9" x2="180.8" y2="387.9" stroke="#008b8b" stroke-width="1.2"/>
<line x1="188.6" y1="397.8" x2="201" y2="397.8" stroke="#32cd32" stroke-width="1.2"/>
<line x1="188.6" y1="405.9" x2="201" y2="405.9" stroke="#008b8b" stroke-width="1.3"/>
<line x1="241.4" y1="355.9" x2="253.3" y2="355.9" stroke="#a01030" stroke-width="1.5"/>
<line x1="266.2" y1="353" x2="270.2" y2="353" stroke="#32cd32" stroke-width="1.4"/>
<line x1="265.9" y1="371.7" x2="269.9" y2="371.7" stroke="#008b8b" stroke-width="1.2"/>
<line x1="262.5" y1="323.4" x2="266.5" y2="323.4" stroke="#c2188c" stroke-width="1.2"/>
<line x1="490" y1="452.6" x2="515" y2="452.6" stroke="#dc143c" stroke-width="1.3"/>
<line x1="539.5" y1="361.3" x2="555.7" y2="361.3" stroke="#dc143c" stroke-width="1.3"/>
<line x1="494.3" y1="520.8" x2="500" y2="520.8" stroke="#32cd32" stroke-width="1.2"/>
<line x1="562.5" y1="88.4" x2="565.5" y2="88.4" stroke="#4da3ff" stroke-width="1.2"/>
<line x1="564" y1="213.8" x2="584.5" y2="213.8" stroke="#008b8b" stroke-width="1.4"/>
<line x1="641.4" y1="426" x2="654" y2="426" stroke="#008b8b" stroke-width="1.6"/>
<line x1="702.4" y1="397.3" x2="706.4" y2="397.3" stroke="#32cd32" stroke-width="1.2"/>
<line x1="702.4" y1="411.4" x2="706.4" y2="411.4" stroke="#008b8b" stroke-width="1.2"/>
<line x1="735.3" y1="445.1" x2="751" y2="445.1" stroke="#008b8b" stroke-width="1.3"/>
<line x1="788" y1="485.3" x2="806" y2="485.3" stroke="#008b8b" stroke-width="1.3"/>
<line x1="735" y1="445" x2="748.6" y2="445" stroke="#008b8b" stroke-width="1.3"/>
<line x1="388.8" y1="497.4" x2="400" y2="497.4" stroke="#008b8b" stroke-width="1.3"/>
<line x1="421.5" y1="502.4" x2="433.2" y2="502.4" stroke="#008b8b" stroke-width="1.3"/>
<line x1="454" y1="510.4" x2="469" y2="510.4" stroke="#008b8b" stroke-width="1.3"/>
<line x1="917.3" y1="466.1" x2="921.3" y2="466.1" stroke="#dc143c" stroke-width="1.3"/>
<line x1="197" y1="374.7" x2="211.6" y2="374.7" stroke="#a01030" stroke-width="1.5" stroke-dasharray="4,3"/>
<line x1="241.6" y1="387.3" x2="248.2" y2="387.3" stroke="#dc143c" stroke-width="1.2" stroke-dasharray="4,2.5"/>
<line x1="539.5" y1="394.3" x2="555" y2="394.3" stroke="#dc143c" stroke-width="1.2" stroke-dasharray="5,4"/>
<line x1="490" y1="486.4" x2="515" y2="486.4" stroke="#dc143c" stroke-width="1.2" stroke-dasharray="5,4"/>
<line x1="564" y1="167.3" x2="579" y2="167.3" stroke="#28a428" stroke-width="1.3" stroke-dasharray="5,5"/>
<line x1="641.4" y1="419.7" x2="654" y2="419.7" stroke="#28a428" stroke-width="1.2" stroke-dasharray="5,4"/>
<line x1="735.3" y1="431.3" x2="751" y2="431.3" stroke="#28a428" stroke-width="1.2" stroke-dasharray="5,5"/>
<line x1="388.8" y1="489.4" x2="400.5" y2="489.4" stroke="#28a428" stroke-width="1.2" stroke-dasharray="5,3"/>
<line x1="421.5" y1="497.3" x2="433.2" y2="497.3" stroke="#28a428" stroke-width="1.2" stroke-dasharray="5,3"/>
<line x1="454" y1="503.4" x2="469" y2="503.4" stroke="#28a428" stroke-width="1.2" stroke-dasharray="6,3"/>
<line x1="742" y1="431.1" x2="751" y2="431.1" stroke="#28a428" stroke-width="1.2" stroke-dasharray="4,3"/>
<text x="62.2" y="433.6" font-size="15.0" fill="#9d7bd8" text-anchor="middle">5</text>
<text x="66.2" y="437.4" font-size="11.4" fill="#fb5569" text-anchor="middle">6</text>
<text x="70.5" y="424.4" font-size="12.1" fill="#fb5569" text-anchor="middle">7</text>
<text x="74.4" y="448.2" font-size="14.3" fill="#fb5569" text-anchor="middle">8</text>
<path d="M81.1,438.0 L83.6,436.3 V444.8" fill="none" stroke="#fb5569" stroke-width="1.10" stroke-linejoin="bevel"/>
<text x="62.2" y="454.1" font-size="13.7" fill="#fb5569" text-anchor="middle">5</text>
<path d="M43.8,476.3 L46.7,474.2 V484.2" fill="none" stroke="#9d7bd8" stroke-width="1.10" stroke-linejoin="bevel"/>
<text x="50.4" y="479.8" font-size="14.3" fill="#9d7bd8" text-anchor="middle">2</text>
<text x="54.3" y="475.5" font-size="14.3" fill="#9d7bd8" text-anchor="middle">3</text>
<text x="58.6" y="475.5" font-size="14.3" fill="#9d7bd8" text-anchor="middle">4</text>
<path d="M43.8,497.4 L46.7,495.3 V505.4" fill="none" stroke="#fb5569" stroke-width="1.10" stroke-linejoin="bevel"/>
<text x="50.0" y="500.5" font-size="14.3" fill="#fb5569" text-anchor="middle">2</text>
<text x="54.3" y="496.0" font-size="14.3" fill="#fb5569" text-anchor="middle">3</text>
<text x="58.6" y="496.2" font-size="14.3" fill="#fb5569" text-anchor="middle">4</text>
<text x="103.4" y="461.4" font-size="14.3" fill="#fb5569" text-anchor="middle">2</text>
<text x="110.6" y="461.4" font-size="14.3" fill="#fb5569" text-anchor="middle">3</text>
<text x="116.8" y="456.9" font-size="13.6" fill="#fb5569" text-anchor="middle">4</text>
<text x="119.5" y="454.6" font-size="13.6" fill="#fb5569" text-anchor="middle">5</text>
<text x="135.6" y="456.8" font-size="14.3" fill="#fb5569" text-anchor="middle">6</text>
<path d="M140.6,393.5 L143.1,391.8 V400.3" fill="none" stroke="#9d7bd8" stroke-width="1.10" stroke-linejoin="bevel"/>
<text x="145.1" y="396.3" font-size="12.9" fill="#9d7bd8" text-anchor="middle">2</text>
<text x="148.8" y="390.1" font-size="12.9" fill="#9d7bd8" text-anchor="middle">3</text>
<text x="155.3" y="389.5" font-size="12.9" fill="#9d7bd8" text-anchor="middle">4</text>
<text x="158.6" y="387.1" font-size="12.9" fill="#9d7bd8" text-anchor="middle">5</text>
<text x="161.3" y="385.5" font-size="12.9" fill="#9d7bd8" text-anchor="middle">6</text>
<text x="138.9" y="420.2" font-size="13.6" fill="#dc143c" text-anchor="middle">7</text>
<text x="143.8" y="418.4" font-size="13.6" fill="#dc143c" text-anchor="middle">8</text>
<text x="147.1" y="410.1" font-size="13.6" fill="#dc143c" text-anchor="middle">9</text>
<path d="M146.5,403.5 L149.1,401.7 V410.8" fill="none" stroke="#dc143c" stroke-width="1.10" stroke-linejoin="bevel"/>
<text x="155.0" y="410.8" font-size="13.6" fill="#dc143c" text-anchor="middle">0</text>
<path d="M154.1,401.5 L156.7,399.7 V408.8" fill="none" stroke="#dc143c" stroke-width="1.10" stroke-linejoin="bevel"/>
<text x="162.6" y="408.8" font-size="13.6" fill="#dc143c" text-anchor="middle">2</text>
<text x="165.2" y="415.6" font-size="13.6" fill="#fb5569" text-anchor="middle">7</text>
<text x="162.2" y="422.2" font-size="13.6" fill="#fb5569" text-anchor="middle">6</text>
<path d="M140.5,433.5 L143.1,431.7 V440.8" fill="none" stroke="#fb5569" stroke-width="1.10" stroke-linejoin="bevel"/>
<text x="144.5" y="436.1" font-size="13.6" fill="#fb5569" text-anchor="middle">2</text>
<text x="148.8" y="430.8" font-size="13.6" fill="#fb5569" text-anchor="middle">3</text>
<text x="153.4" y="430.8" font-size="13.6" fill="#fb5569" text-anchor="middle">4</text>
<text x="158.0" y="428.6" font-size="13.6" fill="#fb5569" text-anchor="middle">5</text>
<text x="161.3" y="425.6" font-size="13.6" fill="#fb5569" text-anchor="middle">6</text>
<path d="M147.6,380.6 L154.9,375.4 V401.1" fill="none" stroke="#dc143c" stroke-width="2.90" stroke-linejoin="bevel"/>
<text x="171.7" y="401.1" font-size="38.6" fill="#dc143c" text-anchor="middle">3</text>
<text x="168.2" y="394.4" font-size="12.1" fill="#fb5569" text-anchor="middle">8</text>
<path d="M171.2,335.0 L173.9,333.1 V342.6" fill="none" stroke="#9d7bd8" stroke-width="1.10" stroke-linejoin="bevel"/>
<path d="M177.5,335.0 L180.2,333.1 V342.6" fill="none" stroke="#9d7bd8" stroke-width="1.10" stroke-linejoin="bevel"/>
<text x="164.5" y="334.3" font-size="14.3" fill="#9d7bd8" text-anchor="middle">8</text>
<text x="177.0" y="362.8" font-size="12.9" fill="#dc143c" text-anchor="middle">2</text>
<text x="168.8" y="373.6" font-size="13.6" fill="#9d7bd8" text-anchor="middle">9</text>
<path d="M166.4,273.0 L169.1,271.1 V280.6" fill="none" stroke="#9d7bd8" stroke-width="1.10" stroke-linejoin="bevel"/>
<text x="175.3" y="280.6" font-size="14.3" fill="#9d7bd8" text-anchor="middle">0</text>
<path d="M170.5,314.0 L173.2,312.1 V321.6" fill="none" stroke="#dc143c" stroke-width="1.10" stroke-linejoin="bevel"/>
<path d="M206.8,312.4 L209.5,310.5 V320.0" fill="none" stroke="#9d7bd8" stroke-width="1.10" stroke-linejoin="bevel"/>
<text x="215.7" y="320.0" font-size="14.3" fill="#9d7bd8" text-anchor="middle">2</text>
<text x="188.2" y="385.3" font-size="14.3" fill="#dc143c" text-anchor="middle">3</text>
<text x="193.5" y="388.6" font-size="14.3" fill="#dc143c" text-anchor="middle">4</text>
<text x="200.0" y="385.7" font-size="14.3" fill="#dc143c" text-anchor="middle">5</text>
<text x="202.7" y="384.2" font-size="12.9" fill="#dc143c" text-anchor="middle">5</text>
<text x="205.7" y="382.8" font-size="13.6" fill="#dc143c" text-anchor="middle">6</text>
<text x="217.5" y="352.4" font-size="14.3" fill="#dc143c" text-anchor="middle">8</text>
<text x="213.4" y="339.5" font-size="14.3" fill="#dc143c" text-anchor="middle">7</text>
<text x="245.6" y="406.4" font-size="14.3" fill="#dc143c" text-anchor="middle">9</text>
<path d="M243.8,365.0 L246.5,363.1 V372.6" fill="none" stroke="#dc143c" stroke-width="1.10" stroke-linejoin="bevel"/>
<text x="252.7" y="372.6" font-size="14.3" fill="#dc143c" text-anchor="middle">0</text>
<path d="M245.6,274.5 L252.7,269.5 V294.4" fill="none" stroke="#9d7bd8" stroke-width="2.90" stroke-linejoin="bevel"/>
<text x="269.1" y="294.4" font-size="37.6" fill="#9d7bd8" text-anchor="middle">3</text>
<path d="M245.6,319.2 L252.7,314.2 V339.1" fill="none" stroke="#dc143c" stroke-width="2.90" stroke-linejoin="bevel"/>
<text x="269.1" y="339.1" font-size="37.6" fill="#dc143c" text-anchor="middle">3</text>
<path d="M249.9,312.7 L257.0,307.7 V332.6" fill="none" stroke="#9d7bd8" stroke-width="2.90" stroke-linejoin="bevel"/>
<text x="273.4" y="332.6" font-size="37.6" fill="#9d7bd8" text-anchor="middle">3</text>
<path d="M247.4,343.5 L250.1,341.6 V351.1" fill="none" stroke="#dc143c" stroke-width="1.10" stroke-linejoin="bevel"/>
<path d="M253.7,343.5 L256.4,341.6 V351.1" fill="none" stroke="#dc143c" stroke-width="1.10" stroke-linejoin="bevel"/>
<path d="M253.7,345.2 L256.4,343.3 V352.8" fill="none" stroke="#dc143c" stroke-width="1.10" stroke-linejoin="bevel"/>
<text x="262.6" y="352.8" font-size="14.3" fill="#dc143c" text-anchor="middle">2</text>
<path d="M268.2,380.8 L270.8,379.0 V388.1" fill="none" stroke="#32cd32" stroke-width="1.10" stroke-linejoin="bevel"/>
<text x="274.5" y="386.8" font-size="13.6" fill="#32cd32" text-anchor="middle">2</text>
<text x="278.1" y="400.6" font-size="13.6" fill="#32cd32" text-anchor="middle">3</text>
<text x="283.4" y="398.2" font-size="13.6" fill="#32cd32" text-anchor="middle">4</text>
<text x="286.3" y="413.8" font-size="13.6" fill="#32cd32" text-anchor="middle">5</text>
<text x="290.0" y="443.4" font-size="12.9" fill="#32cd32" text-anchor="middle">6</text>
<text x="294.2" y="435.1" font-size="13.6" fill="#32cd32" text-anchor="middle">7</text>
<text x="298.5" y="449.3" font-size="12.9" fill="#32cd32" text-anchor="middle">8</text>
<path d="M266.1,402.3 L270.5,399.2 V414.9" fill="none" stroke="#9d7bd8" stroke-width="1.90" stroke-linejoin="bevel"/>
<text x="278.1" y="426.8" font-size="23.6" fill="#9d7bd8" text-anchor="middle">2</text>
<text x="286.3" y="439.9" font-size="23.6" fill="#9d7bd8" text-anchor="middle">3</text>
<text x="290.9" y="467.5" font-size="21.4" fill="#9d7bd8" text-anchor="middle">4</text>
<text x="298.4" y="478.1" font-size="21.4" fill="#9d7bd8" text-anchor="middle">5</text>
<text x="307.8" y="491.7" font-size="23.4" fill="#9d7bd8" text-anchor="middle">7</text>
<text x="309.3" y="465.7" font-size="15.7" fill="#dc143c" text-anchor="middle">2</text>
<text x="316.6" y="483.4" font-size="13.6" fill="#c62f3e" text-anchor="middle">4</text>
<text x="319.3" y="489.9" font-size="13.6" fill="#c62f3e" text-anchor="middle">5</text>
<text x="323.2" y="495.2" font-size="12.9" fill="#c62f3e" text-anchor="middle">6</text>
<text x="327.2" y="498.1" font-size="13.6" fill="#c62f3e" text-anchor="middle">7</text>
<path d="M300.6,498.0 L303.1,496.3 V504.8" fill="none" stroke="#dc143c" stroke-width="1.10" stroke-linejoin="bevel"/>
<text x="314.3" y="505.5" font-size="18.6" fill="#9d7bd8" text-anchor="middle">8</text>
<g fill="none" stroke="#9d7bd8" stroke-width="1.9" stroke-linecap="butt"><ellipse cx="318.3" cy="501.1" rx="3.4" ry="3.2"/><path d="M321.5,503.4 L316.8,509.1"/></g>
<path d="M312.1,508.2 L316.4,505.3 V520.4" fill="none" stroke="#9d7bd8" stroke-width="1.90" stroke-linejoin="bevel"/>
<text x="326.3" y="520.4" font-size="22.9" fill="#9d7bd8" text-anchor="middle">0</text>
<path d="M319.1,511.7 L324.0,508.3 V525.4" fill="none" stroke="#9d7bd8" stroke-width="1.90" stroke-linejoin="bevel"/>
<path d="M330.4,511.7 L335.3,508.3 V525.4" fill="none" stroke="#9d7bd8" stroke-width="1.90" stroke-linejoin="bevel"/>
<path d="M332.2,515.3 L336.8,512.1 V528.2" fill="none" stroke="#9d7bd8" stroke-width="1.90" stroke-linejoin="bevel"/>
<text x="347.3" y="528.2" font-size="24.3" fill="#9d7bd8" text-anchor="middle">2</text>
<text x="340.0" y="501.6" font-size="14.3" fill="#c62f3e" text-anchor="middle">8</text>
<text x="343.6" y="491.4" font-size="12.1" fill="#c62f3e" text-anchor="middle">9</text>
<path d="M344.4,490.9 L347.0,489.1 V498.1" fill="none" stroke="#c62f3e" stroke-width="1.10" stroke-linejoin="bevel"/>
<text x="352.9" y="498.1" font-size="13.6" fill="#c62f3e" text-anchor="middle">0</text>
<path d="M350.5,490.5 L353.1,488.7 V497.8" fill="none" stroke="#c62f3e" stroke-width="1.10" stroke-linejoin="bevel"/>
<path d="M356.5,490.5 L359.1,488.7 V497.8" fill="none" stroke="#c62f3e" stroke-width="1.10" stroke-linejoin="bevel"/>
<path d="M355.5,497.7 L357.9,496.0 V504.5" fill="none" stroke="#c62f3e" stroke-width="1.10" stroke-linejoin="bevel"/>
<text x="363.5" y="504.5" font-size="12.9" fill="#c62f3e" text-anchor="middle">2</text>
<path d="M349.6,501.1 L356.9,495.9 V521.9" fill="none" stroke="#c62f3e" stroke-width="2.90" stroke-linejoin="bevel"/>
<text x="373.9" y="521.9" font-size="39.0" fill="#c62f3e" text-anchor="middle">3</text>
<path d="M345.1,517.8 L352.2,512.8 V537.8" fill="none" stroke="#9d7bd8" stroke-width="2.90" stroke-linejoin="bevel"/>
<text x="368.6" y="537.8" font-size="37.6" fill="#9d7bd8" text-anchor="middle">3</text>
<g fill="none" stroke="#9d7bd8" stroke-width="1.9" stroke-linecap="butt" transform="rotate(180 302.8 543.0)"><ellipse cx="302.8" cy="540.1" rx="4.9" ry="4.6"/><path d="M307.3,543.3 L300.8,551.1"/></g>
<text x="490.4" y="540.5" font-size="25.1" fill="#ffa726" text-anchor="middle">0</text>
<text x="502.6" y="468.7" font-size="14.3" fill="#fb5569" text-anchor="middle">3</text>
<text x="511.0" y="473.3" font-size="14.3" fill="#fb5569" text-anchor="middle">5</text>
<text x="498.4" y="478.8" font-size="14.3" fill="#fb5569" text-anchor="middle">2</text>
<text x="506.8" y="477.9" font-size="14.3" fill="#fb5569" text-anchor="middle">4</text>
<text x="515.2" y="441.9" font-size="14.3" fill="#fb5569" text-anchor="middle">6</text>
<text x="519.3" y="436.9" font-size="14.3" fill="#fb5569" text-anchor="middle">7</text>
<text x="523.5" y="413.9" font-size="14.3" fill="#fb5569" text-anchor="middle">8</text>
<path d="M493.6,497.8 L496.1,496.1 V504.6" fill="none" stroke="#dc143c" stroke-width="1.10" stroke-linejoin="bevel"/>
<path d="M559.5,105.1 L564.1,101.9 V118.0" fill="none" stroke="#ffa726" stroke-width="1.90" stroke-linejoin="bevel"/>
<path d="M578.4,192.4 L581.1,190.5 V200.0" fill="none" stroke="#32cd32" stroke-width="1.10" stroke-linejoin="bevel"/>
<text x="584.7" y="282.9" font-size="15.0" fill="#32cd32" text-anchor="middle">2</text>
<path d="M580.5,295.6 L585.1,292.4 V308.5" fill="none" stroke="#9d7bd8" stroke-width="1.90" stroke-linejoin="bevel"/>
<text x="588.3" y="323.1" font-size="14.3" fill="#32cd32" text-anchor="middle">3</text>
<text x="588.6" y="348.7" font-size="23.4" fill="#9d7bd8" text-anchor="middle">2</text>
<text x="592.6" y="348.6" font-size="13.1" fill="#32cd32" text-anchor="middle">4</text>
<text x="592.0" y="374.7" font-size="23.4" fill="#9d7bd8" text-anchor="middle">3</text>
<text x="597.0" y="377.4" font-size="11.4" fill="#32cd32" text-anchor="middle">5</text>
<text x="600.3" y="381.9" font-size="12.1" fill="#32cd32" text-anchor="middle">6</text>
<text x="599.0" y="405.6" font-size="23.4" fill="#9d7bd8" text-anchor="middle">4</text>
<text x="602.3" y="407.6" font-size="23.4" fill="#9d7bd8" text-anchor="middle">5</text>
<text x="609.2" y="416.1" font-size="12.9" fill="#32cd32" text-anchor="middle">8</text>
<g fill="none" stroke="#9d7bd8" stroke-width="1.9" stroke-linecap="butt" transform="rotate(180 604.6 426.7)"><ellipse cx="604.6" cy="423.8" rx="4.9" ry="4.6"/><path d="M609.1,427.0 L602.6,434.8"/></g>
<text x="610.2" y="442.5" font-size="23.4" fill="#9d7bd8" text-anchor="middle">7</text>
<text x="618.8" y="445.2" font-size="14.3" fill="#c62f3e" text-anchor="middle">2</text>
<text x="621.0" y="439.9" font-size="12.1" fill="#c62f3e" text-anchor="middle">3</text>
<path d="M611.3,450.6 L613.2,449.4 V455.9" fill="none" stroke="#c62f3e" stroke-width="1.10" stroke-linejoin="bevel"/>
<text x="617.0" y="470.6" font-size="23.7" fill="#9d7bd8" text-anchor="middle">8</text>
<text x="630.3" y="457.6" font-size="15.0" fill="#c62f3e" text-anchor="middle">4</text>
<text x="633.3" y="462.8" font-size="14.3" fill="#c62f3e" text-anchor="middle">5</text>
<text x="650.0" y="432.6" font-size="15.0" fill="#c62f3e" text-anchor="middle">7</text>
<text x="645.4" y="440.0" font-size="14.3" fill="#c62f3e" text-anchor="middle">6</text>
<text x="654.0" y="447.2" font-size="14.3" fill="#c62f3e" text-anchor="middle">8</text>
<text x="657.2" y="455.4" font-size="14.3" fill="#c62f3e" text-anchor="middle">9</text>
<path d="M657.1,440.5 L660.0,438.4 V448.4" fill="none" stroke="#c62f3e" stroke-width="1.10" stroke-linejoin="bevel"/>
<text x="666.5" y="448.4" font-size="15.0" fill="#c62f3e" text-anchor="middle">0</text>
<path d="M661.0,459.2 L663.4,457.5 V466.0" fill="none" stroke="#c62f3e" stroke-width="1.10" stroke-linejoin="bevel"/>
<path d="M666.7,459.2 L669.1,457.5 V466.0" fill="none" stroke="#c62f3e" stroke-width="1.10" stroke-linejoin="bevel"/>
<path d="M664.9,466.4 L667.6,464.5 V474.0" fill="none" stroke="#c62f3e" stroke-width="1.10" stroke-linejoin="bevel"/>
<text x="673.8" y="474.0" font-size="14.3" fill="#c62f3e" text-anchor="middle">2</text>
<text x="629.0" y="478.6" font-size="17.1" fill="#9d7bd8" text-anchor="middle">9</text>
<path d="M624.4,475.6 L629.1,472.3 V488.9" fill="none" stroke="#9d7bd8" stroke-width="1.90" stroke-linejoin="bevel"/>
<text x="640.0" y="488.9" font-size="25.0" fill="#9d7bd8" text-anchor="middle">0</text>
<path d="M657.6,475.2 L664.9,470.0 V495.9" fill="none" stroke="#c62f3e" stroke-width="2.90" stroke-linejoin="bevel"/>
<text x="681.9" y="495.9" font-size="39.0" fill="#c62f3e" text-anchor="middle">3</text>
<path d="M655.2,480.8 L660.1,477.4 V494.5" fill="none" stroke="#9d7bd8" stroke-width="1.90" stroke-linejoin="bevel"/>
<path d="M666.5,480.8 L671.4,477.4 V494.5" fill="none" stroke="#9d7bd8" stroke-width="1.90" stroke-linejoin="bevel"/>
<path d="M660.8,487.9 L665.4,484.7 V501.0" fill="none" stroke="#9d7bd8" stroke-width="1.90" stroke-linejoin="bevel"/>
<text x="676.1" y="501.0" font-size="24.6" fill="#9d7bd8" text-anchor="middle">2</text>
<path d="M658.0,519.6 L665.2,514.6 V539.8" fill="none" stroke="#9d7bd8" stroke-width="2.90" stroke-linejoin="bevel"/>
<text x="681.6" y="539.8" font-size="37.9" fill="#9d7bd8" text-anchor="middle">3</text>
<path d="M746.4,446.6 L748.9,444.8 V453.6" fill="none" stroke="#32cd32" stroke-width="1.10" stroke-linejoin="bevel"/>
<text x="752.6" y="459.8" font-size="13.3" fill="#32cd32" text-anchor="middle">2</text>
<text x="756.9" y="461.5" font-size="13.3" fill="#32cd32" text-anchor="middle">3</text>
<text x="762.3" y="461.2" font-size="13.3" fill="#32cd32" text-anchor="middle">4</text>
<text x="764.1" y="469.0" font-size="12.9" fill="#32cd32" text-anchor="middle">5</text>
<text x="768.0" y="476.9" font-size="12.1" fill="#32cd32" text-anchor="middle">6</text>
<text x="772.3" y="474.9" font-size="12.1" fill="#32cd32" text-anchor="middle">7</text>
<text x="776.3" y="478.7" font-size="12.9" fill="#32cd32" text-anchor="middle">8</text>
<path d="M744.1,467.2 L748.7,464.0 V480.1" fill="none" stroke="#9d7bd8" stroke-width="1.90" stroke-linejoin="bevel"/>
<text x="753.3" y="486.5" font-size="22.9" fill="#9d7bd8" text-anchor="middle">2</text>
<text x="757.6" y="488.3" font-size="22.9" fill="#9d7bd8" text-anchor="middle">3</text>
<text x="764.8" y="494.4" font-size="22.9" fill="#9d7bd8" text-anchor="middle">4</text>
<text x="767.3" y="503.3" font-size="22.9" fill="#9d7bd8" text-anchor="middle">5</text>
<g fill="none" stroke="#9d7bd8" stroke-width="1.9" stroke-linecap="butt" transform="rotate(180 775.6 497.1)"><ellipse cx="775.6" cy="494.3" rx="4.6" ry="4.3"/><path d="M779.8,497.4 L773.7,504.7"/></g>
<path d="M803.1,484.2 L806.1,482.1 V492.6" fill="none" stroke="#32cd32" stroke-width="1.10" stroke-linejoin="bevel"/>
<text x="809.7" y="493.5" font-size="14.3" fill="#32cd32" text-anchor="middle">2</text>
<text x="814.0" y="499.1" font-size="13.6" fill="#32cd32" text-anchor="middle">3</text>
<text x="817.2" y="495.1" font-size="15.7" fill="#32cd32" text-anchor="middle">4</text>
<text x="820.8" y="504.9" font-size="12.1" fill="#32cd32" text-anchor="middle">5</text>
<text x="824.4" y="501.8" font-size="12.1" fill="#32cd32" text-anchor="middle">6</text>
<text x="831.2" y="507.0" font-size="12.9" fill="#32cd32" text-anchor="middle">8</text>
<path d="M839.8,473.5 L842.7,471.4 V481.7" fill="none" stroke="#fb5569" stroke-width="1.10" stroke-linejoin="bevel"/>
<text x="845.6" y="486.9" font-size="13.6" fill="#fb5569" text-anchor="middle">2</text>
<text x="849.9" y="472.3" font-size="14.3" fill="#fb5569" text-anchor="middle">3</text>
<text x="854.2" y="474.5" font-size="14.3" fill="#fb5569" text-anchor="middle">4</text>
<text x="858.5" y="465.9" font-size="13.6" fill="#fb5569" text-anchor="middle">5</text>
<text x="862.1" y="458.1" font-size="13.6" fill="#fb5569" text-anchor="middle">6</text>
<text x="864.2" y="451.4" font-size="12.9" fill="#fb5569" text-anchor="middle">7</text>
<text x="870.7" y="471.3" font-size="14.3" fill="#fb5569" text-anchor="middle">8</text>
<text x="805.7" y="514.5" font-size="20.0" fill="#9d7bd8" text-anchor="middle">8</text>
<g fill="none" stroke="#9d7bd8" stroke-width="1.9" stroke-linecap="butt"><ellipse cx="809.0" cy="507.5" rx="3.5" ry="3.3"/><path d="M812.3,509.9 L807.4,515.8"/></g>
<path d="M803.5,512.5 L808.1,509.3 V525.4" fill="none" stroke="#9d7bd8" stroke-width="1.90" stroke-linejoin="bevel"/>
<text x="818.6" y="525.4" font-size="24.3" fill="#9d7bd8" text-anchor="middle">0</text>
<path d="M811.9,517.5 L816.5,514.3 V530.4" fill="none" stroke="#9d7bd8" stroke-width="1.90" stroke-linejoin="bevel"/>
<path d="M822.6,517.5 L827.2,514.3 V530.4" fill="none" stroke="#9d7bd8" stroke-width="1.90" stroke-linejoin="bevel"/>
<path d="M819.8,518.4 L824.1,515.5 V530.6" fill="none" stroke="#9d7bd8" stroke-width="1.90" stroke-linejoin="bevel"/>
<text x="834.0" y="530.6" font-size="22.9" fill="#9d7bd8" text-anchor="middle">2</text>
<path d="M814.2,520.7 L821.5,515.5 V541.2" fill="none" stroke="#9d7bd8" stroke-width="2.90" stroke-linejoin="bevel"/>
<text x="838.3" y="541.2" font-size="38.6" fill="#9d7bd8" text-anchor="middle">3</text>
<text x="780.4" y="556.9" font-size="23.6" fill="#9d7bd8" text-anchor="middle">7</text>
<text x="914.5" y="395.2" font-size="12.3" fill="#fb5569" text-anchor="middle">8</text>
<text x="910.6" y="413.1" font-size="14.3" fill="#fb5569" text-anchor="middle">7</text>
<text x="898.7" y="421.7" font-size="14.3" fill="#fb5569" text-anchor="middle">4</text>
<text x="906.6" y="426.1" font-size="13.6" fill="#fb5569" text-anchor="middle">6</text>
<text x="902.3" y="437.6" font-size="13.6" fill="#fb5569" text-anchor="middle">5</text>
<text x="894.8" y="441.9" font-size="13.6" fill="#fb5569" text-anchor="middle">3</text>
<text x="890.8" y="450.8" font-size="14.3" fill="#fb5569" text-anchor="middle">2</text>
<path d="M884.5,451.9 L887.1,450.1 V459.1" fill="none" stroke="#fb5569" stroke-width="1.10" stroke-linejoin="bevel"/>
<path d="M924.9,441.4 L927.6,439.5 V449.0" fill="none" stroke="#32cd32" stroke-width="1.10" stroke-linejoin="bevel"/>
<text x="931.0" y="455.6" font-size="13.6" fill="#32cd32" text-anchor="middle">2</text>
<text x="935.3" y="448.3" font-size="14.3" fill="#32cd32" text-anchor="middle">3</text>
<text x="939.3" y="460.5" font-size="14.3" fill="#32cd32" text-anchor="middle">4</text>
<text x="943.5" y="473.6" font-size="13.6" fill="#32cd32" text-anchor="middle">5</text>
<text x="947.3" y="477.7" font-size="12.9" fill="#32cd32" text-anchor="middle">6</text>
<text x="951.9" y="476.9" font-size="12.9" fill="#32cd32" text-anchor="middle">7</text>
<text x="956.1" y="482.8" font-size="12.9" fill="#32cd32" text-anchor="middle">8</text>
<path d="M923.5,462.7 L928.1,459.6 V475.5" fill="none" stroke="#9d7bd8" stroke-width="1.90" stroke-linejoin="bevel"/>
<text x="932.9" y="480.4" font-size="23.6" fill="#9d7bd8" text-anchor="middle">2</text>
<text x="939.0" y="486.6" font-size="23.6" fill="#9d7bd8" text-anchor="middle">3</text>
<text x="943.7" y="498.9" font-size="22.9" fill="#9d7bd8" text-anchor="middle">4</text>
<text x="947.3" y="502.4" font-size="23.6" fill="#9d7bd8" text-anchor="middle">5</text>
<g fill="none" stroke="#9d7bd8" stroke-width="1.9" stroke-linecap="butt" transform="rotate(180 951.3 498.8)"><ellipse cx="951.3" cy="496.6" rx="3.5" ry="3.3"/><path d="M954.6,499.0 L949.7,504.9"/></g>
<text x="956.3" y="509.6" font-size="23.6" fill="#9d7bd8" text-anchor="middle">7</text>
<text x="963.8" y="499.5" font-size="14.3" fill="#c62f3e" text-anchor="middle">2</text>
<text x="967.8" y="505.3" font-size="11.4" fill="#c62f3e" text-anchor="middle">3</text>
<text x="973.9" y="501.6" font-size="15.0" fill="#c62f3e" text-anchor="middle">4</text>
<text x="980.3" y="505.3" font-size="14.3" fill="#c62f3e" text-anchor="middle">5</text>
<text x="984.6" y="504.5" font-size="14.3" fill="#c62f3e" text-anchor="middle">6</text>
<text x="988.2" y="508.2" font-size="13.6" fill="#c62f3e" text-anchor="middle">7</text>
<text x="996.5" y="509.6" font-size="14.3" fill="#c62f3e" text-anchor="middle">8</text>
<text x="1001.5" y="510.4" font-size="13.6" fill="#c62f3e" text-anchor="middle">9</text>
<path d="M1006.1,507.9 L1009.0,505.8 V516.1" fill="none" stroke="#c62f3e" stroke-width="1.10" stroke-linejoin="bevel"/>
<text x="1015.7" y="516.1" font-size="15.4" fill="#c62f3e" text-anchor="middle">0</text>
<path d="M1014.5,505.8 L1017.4,503.7 V513.8" fill="none" stroke="#c62f3e" stroke-width="1.10" stroke-linejoin="bevel"/>
<path d="M1021.1,505.8 L1024.0,503.7 V513.8" fill="none" stroke="#c62f3e" stroke-width="1.10" stroke-linejoin="bevel"/>
<path d="M1020.2,504.1 L1022.9,502.2 V511.7" fill="none" stroke="#c62f3e" stroke-width="1.10" stroke-linejoin="bevel"/>
<text x="1029.1" y="511.7" font-size="14.3" fill="#c62f3e" text-anchor="middle">2</text>
<path d="M1021.4,505.4 L1028.7,500.2 V526.1" fill="none" stroke="#c62f3e" stroke-width="2.90" stroke-linejoin="bevel"/>
<text x="1045.7" y="526.1" font-size="39.0" fill="#c62f3e" text-anchor="middle">3</text>
<text x="964.2" y="520.4" font-size="16.4" fill="#9d7bd8" text-anchor="middle">9</text>
<path d="M959.2,517.8 L964.1,514.4 V531.5" fill="none" stroke="#9d7bd8" stroke-width="1.90" stroke-linejoin="bevel"/>
<text x="975.3" y="531.5" font-size="25.7" fill="#9d7bd8" text-anchor="middle">0</text>
<path d="M978.6,521.7 L983.2,518.5 V534.6" fill="none" stroke="#9d7bd8" stroke-width="1.90" stroke-linejoin="bevel"/>
<path d="M989.3,521.7 L993.9,518.5 V534.6" fill="none" stroke="#9d7bd8" stroke-width="1.90" stroke-linejoin="bevel"/>
<path d="M986.2,522.6 L990.8,519.4 V535.5" fill="none" stroke="#9d7bd8" stroke-width="1.90" stroke-linejoin="bevel"/>
<text x="1001.3" y="535.5" font-size="24.3" fill="#9d7bd8" text-anchor="middle">2</text>
<path d="M986.6,524.6 L993.7,519.5 V544.8" fill="none" stroke="#9d7bd8" stroke-width="2.90" stroke-linejoin="bevel"/>
<text x="1010.3" y="544.8" font-size="38.0" fill="#9d7bd8" text-anchor="middle">3</text>
<path d="M957.4,531.1 L960.1,529.2 V538.7" fill="none" stroke="#c62f3e" stroke-width="1.10" stroke-linejoin="bevel"/>
<text x="960.2" y="583.9" font-size="20.6" fill="#9d7bd8" text-anchor="middle">8</text>
<path d="M1133.6,464.5 L1136.1,462.7 V471.5" fill="none" stroke="#32cd32" stroke-width="1.10" stroke-linejoin="bevel"/>
<text x="1139.4" y="475.8" font-size="13.3" fill="#32cd32" text-anchor="middle">2</text>
<text x="1144.1" y="465.8" font-size="12.3" fill="#32cd32" text-anchor="middle">3</text>
<text x="1147.7" y="468.8" font-size="13.3" fill="#32cd32" text-anchor="middle">4</text>
<text x="1151.6" y="491.6" font-size="13.3" fill="#32cd32" text-anchor="middle">5</text>
<text x="1156.0" y="502.4" font-size="13.3" fill="#32cd32" text-anchor="middle">6</text>
<text x="1160.3" y="502.5" font-size="12.3" fill="#32cd32" text-anchor="middle">7</text>
<text x="1164.2" y="508.9" font-size="13.3" fill="#32cd32" text-anchor="middle">8</text>
<path d="M1131.1,487.0 L1135.9,483.6 V500.7" fill="none" stroke="#9d7bd8" stroke-width="1.90" stroke-linejoin="bevel"/>
<text x="1139.8" y="501.8" font-size="23.6" fill="#9d7bd8" text-anchor="middle">2</text>
<text x="1151.3" y="518.2" font-size="23.6" fill="#9d7bd8" text-anchor="middle">3</text>
<text x="1154.9" y="524.6" font-size="17.1" fill="#9d7bd8" text-anchor="middle">4</text>
<text x="1158.1" y="528.9" font-size="20.0" fill="#9d7bd8" text-anchor="middle">5</text>
<g fill="none" stroke="#9d7bd8" stroke-width="1.9" stroke-linecap="butt" transform="rotate(180 1163.1 528.0)"><ellipse cx="1163.1" cy="525.4" rx="4.2" ry="4.0"/><path d="M1167.0,528.3 L1161.3,535.1"/></g>
<text x="1171.7" y="541.2" font-size="22.6" fill="#9d7bd8" text-anchor="middle">8</text>
<g fill="none" stroke="#9d7bd8" stroke-width="1.9" stroke-linecap="butt"><ellipse cx="1180.7" cy="536.9" rx="4.9" ry="4.6"/><path d="M1185.2,540.1 L1178.7,547.9"/></g>
<text x="1172.8" y="515.4" font-size="14.3" fill="#c62f3e" text-anchor="middle">2</text>
<text x="1176.4" y="513.3" font-size="12.3" fill="#c62f3e" text-anchor="middle">3</text>
<text x="1183.6" y="514.6" font-size="13.3" fill="#c62f3e" text-anchor="middle">5</text>
<text x="1180.4" y="521.9" font-size="15.4" fill="#c62f3e" text-anchor="middle">4</text>
<text x="1192.2" y="518.2" font-size="13.3" fill="#c62f3e" text-anchor="middle">6</text>
<text x="1196.9" y="518.2" font-size="13.3" fill="#c62f3e" text-anchor="middle">7</text>
<text x="1204.4" y="520.4" font-size="14.3" fill="#c62f3e" text-anchor="middle">8</text>
<text x="1209.1" y="507.5" font-size="14.3" fill="#c62f3e" text-anchor="middle">9</text>
<path d="M1211.1,505.1 L1214.0,503.0 V513.3" fill="none" stroke="#c62f3e" stroke-width="1.10" stroke-linejoin="bevel"/>
<text x="1220.7" y="513.3" font-size="15.4" fill="#c62f3e" text-anchor="middle">0</text>
<path d="M1166.1,550.7 L1168.6,548.9 V557.8" fill="none" stroke="#c62f3e" stroke-width="1.10" stroke-linejoin="bevel"/>
<path d="M1232.3,468.3 L1234.9,466.4 V475.7" fill="none" stroke="#c62f3e" stroke-width="1.10" stroke-linejoin="bevel"/>
<path d="M1238.5,468.3 L1241.1,466.4 V475.7" fill="none" stroke="#c62f3e" stroke-width="1.10" stroke-linejoin="bevel"/>
<path d="M1238.2,477.9 L1241.1,475.8 V486.3" fill="none" stroke="#c62f3e" stroke-width="1.10" stroke-linejoin="bevel"/>
<text x="1248.0" y="486.3" font-size="15.7" fill="#c62f3e" text-anchor="middle">2</text>
<text x="1250.0" y="488.5" font-size="14.3" fill="#c62f3e" text-anchor="middle">4</text>
<text x="1167.4" y="604.6" font-size="23.7" fill="#9d7bd8" text-anchor="middle">7</text>
<path d="M1322.0,515.4 L1329.3,510.2 V536.1" fill="none" stroke="#c62f3e" stroke-width="2.90" stroke-linejoin="bevel"/>
<text x="1346.3" y="536.1" font-size="39.0" fill="#c62f3e" text-anchor="middle">3</text>
<path d="M1333.0,519.5 L1337.9,516.1 V533.2" fill="none" stroke="#9d7bd8" stroke-width="1.90" stroke-linejoin="bevel"/>
<path d="M1344.3,519.5 L1349.2,516.1 V533.2" fill="none" stroke="#9d7bd8" stroke-width="1.90" stroke-linejoin="bevel"/>
<path d="M1339.2,521.6 L1343.8,518.4 V534.5" fill="none" stroke="#9d7bd8" stroke-width="1.90" stroke-linejoin="bevel"/>
<text x="1354.3" y="534.5" font-size="24.3" fill="#9d7bd8" text-anchor="middle">2</text>
<path d="M1340.7,523.3 L1348.0,518.1 V543.8" fill="none" stroke="#9d7bd8" stroke-width="2.90" stroke-linejoin="bevel"/>
<text x="1364.8" y="543.8" font-size="38.6" fill="#9d7bd8" text-anchor="middle">3</text>
<path d="M1328.9,558.2 L1333.5,555.0 V571.3" fill="none" stroke="#9d7bd8" stroke-width="1.90" stroke-linejoin="bevel"/>
<text x="1344.2" y="571.3" font-size="24.6" fill="#9d7bd8" text-anchor="middle">0</text>
<text x="1355.6" y="580.0" font-size="24.3" fill="#ffa726" text-anchor="middle">2</text>
<path d="M1351.9,596.9 L1355.9,594.2 V608.3" fill="none" stroke="#4da3ff" stroke-width="1.90" stroke-linejoin="bevel"/>
<text x="1367.9" y="484.1" font-size="23.9" fill="#4da3ff" text-anchor="middle">2</text>
<path d="M1406.4,474.2 L1409.1,472.3 V481.8" fill="none" stroke="#9d7bd8" stroke-width="1.10" stroke-linejoin="bevel"/>
<path d="M1403.0,500.1 L1405.6,498.3 V507.4" fill="none" stroke="#fb5569" stroke-width="1.10" stroke-linejoin="bevel"/>
<text x="1408.6" y="500.3" font-size="12.9" fill="#fb5569" text-anchor="middle">2</text>
<text x="1412.7" y="505.0" font-size="14.3" fill="#fb5569" text-anchor="middle">3</text>
<g fill="none" stroke="#fb5569" stroke-width="2.9" stroke-linecap="butt"><ellipse cx="78.7" cy="427.9" rx="7.5" ry="7.1"/><path d="M85.6,432.9 L75.6,444.8"/></g>
<g fill="none" stroke="#fb5569" stroke-width="2.9" stroke-linecap="butt"><ellipse cx="172.4" cy="349.1" rx="7.2" ry="6.8"/><path d="M179.0,353.8 L169.4,365.3"/></g>
<g fill="none" stroke="#32cd32" stroke-width="3.8" stroke-linecap="butt"><ellipse cx="303.4" cy="457.2" rx="8.5" ry="7.4"/><path d="M311.4,462.3 L300.2,474.1"/></g>
<g fill="none" stroke="#fb5569" stroke-width="2.9" stroke-linecap="butt"><ellipse cx="527.4" cy="382.3" rx="7.9" ry="7.4"/><path d="M534.6,387.4 L524.2,399.8"/></g>
<g fill="none" stroke="#32cd32" stroke-width="3.8" stroke-linecap="butt"><ellipse cx="613.2" cy="410.6" rx="7.7" ry="6.7"/><path d="M620.6,415.4 L610.2,426.2"/></g>
<g fill="none" stroke="#32cd32" stroke-width="3.8" stroke-linecap="butt"><ellipse cx="780.2" cy="481.9" rx="7.3" ry="6.4"/><path d="M787.2,486.4 L777.3,496.8"/></g>
<g fill="none" stroke="#32cd32" stroke-width="3.8" stroke-linecap="butt"><ellipse cx="837.7" cy="505.9" rx="7.5" ry="6.5"/><path d="M844.9,510.6 L834.8,521.1"/></g>
<g fill="none" stroke="#fb5569" stroke-width="2.9" stroke-linecap="butt"><ellipse cx="873.2" cy="450.2" rx="7.9" ry="7.4"/><path d="M880.4,455.3 L870.0,467.7"/></g>
<g fill="none" stroke="#fb5569" stroke-width="2.9" stroke-linecap="butt"><ellipse cx="919.2" cy="380.2" rx="7.7" ry="7.2"/><path d="M926.3,385.3 L916.0,397.5"/></g>
<g fill="none" stroke="#32cd32" stroke-width="3.8" stroke-linecap="butt"><ellipse cx="960.2" cy="491.2" rx="8.1" ry="7.1"/><path d="M967.9,496.1 L957.1,507.4"/></g>
<g fill="none" stroke="#32cd32" stroke-width="3.8" stroke-linecap="butt"><ellipse cx="1167.8" cy="509.7" rx="7.7" ry="6.7"/><path d="M1175.2,514.5 L1164.8,525.3"/></g>
<path d="M159.5,342.6 h10 l-5.0,9 z" fill="#dc143c"/>
<path d="M167.3,291.5 h10 l-5.0,9 z" fill="#dc143c"/>
<path d="M522.4,343.8 h10 l-5.0,9 z" fill="#dc143c"/>
<path d="M885.5,420.6 h10 l-5.0,9 z" fill="#dc143c"/>
<path d="M914.0,341.3 h10 l-5.0,9 z" fill="#dc143c"/>
<path d="M298.0,525.4 h10 l-5.0,-9 z" fill="#32cd32"/>
<path d="M608.3,479.8 h10 l-5.0,-9 z" fill="#32cd32"/>
<path d="M775.5,530.5 h10 l-5.0,-9 z" fill="#32cd32"/>
<path d="M832.5,553.6 h10 l-5.0,-9 z" fill="#32cd32"/>
<path d="M955.1,558.6 h10 l-5.0,-9 z" fill="#32cd32"/>
<path d="M1162.6,578.9 h10 l-5.0,-9 z" fill="#32cd32"/>
<path d="M1254.7,489.5 h6.6 M1258,486.2 v6.6" stroke="#c62f3e" stroke-width="1.1" fill="none"/>
<path d="M1259.0,491.6 h6.6 M1262.3,488.3 v6.6" stroke="#c62f3e" stroke-width="1.1" fill="none"/>
<path d="M1274.8,495.6 h6.6 M1278.1,492.3 v6.6" stroke="#c62f3e" stroke-width="1.1" fill="none"/>
<path d="M1279.1000000000001,501.4 h6.6 M1282.4,498.09999999999997 v6.6" stroke="#c62f3e" stroke-width="1.1" fill="none"/>
<path d="M1283.4,500.7 h6.6 M1286.7,497.4 v6.6" stroke="#c62f3e" stroke-width="1.1" fill="none"/>
<path d="M1294.9,500.7 h6.6 M1298.2,497.4 v6.6" stroke="#c62f3e" stroke-width="1.1" fill="none"/>
<path d="M1299.4,510.3 h6.6 M1302.7,507.0 v6.6" stroke="#c62f3e" stroke-width="1.1" fill="none"/>
<path d="M1303.0,505.8 h6.6 M1306.3,502.5 v6.6" stroke="#c62f3e" stroke-width="1.1" fill="none"/>
<path d="M1307.2,512.7 h6.6 M1310.5,509.40000000000003 v6.6" stroke="#c62f3e" stroke-width="1.1" fill="none"/>
<path d="M1311.5,516 h6.6 M1314.8,512.7 v6.6" stroke="#c62f3e" stroke-width="1.1" fill="none"/>
<path d="M1315.4,515.3 h6.6 M1318.7,511.99999999999994 v6.6" stroke="#c62f3e" stroke-width="1.1" fill="none"/>
<path d="M1332.1000000000001,514.9 h6.6 M1335.4,511.59999999999997 v6.6" stroke="#c62f3e" stroke-width="1.1" fill="none"/>
<path d="M493.2,450.6 h10 M498.2,445.6 v10" stroke="#ffa726" stroke-width="1.5" fill="none"/>
<path d="M587.1,400.1 h10 M592.1,395.1 v10" stroke="#ffa726" stroke-width="1.5" fill="none"/>
<path d="M600,460.6 h10 M605,455.6 v10" stroke="#4da3ff" stroke-width="1.3" fill="none"/>
<path d="M1358.1,486 h11.0 M1363.6,480.5 v11.0" stroke="#4da3ff" stroke-width="1.4" fill="none"/>
<text x="11.9" y="79" font-size="15.8" font-weight="bold" stroke="#ffffff" stroke-width="0.3" fill="#ffffff" textLength="416.6" lengthAdjust="spacingAndGlyphs">ICE BofA US High Yield Index Option-Adjusted Spread</text>
<circle cx="436.6" cy="74.2" r="2" fill="#ffffff"/>
<text x="445.4" y="79" font-size="15.8" font-weight="bold" stroke="#ffffff" stroke-width="0.3" fill="#ffffff" textLength="142" lengthAdjust="spacingAndGlyphs">BAMLH0A0HYM2</text>
<rect x="596" y="64" width="46.9" height="19.9" fill="#ffdadc" rx="4"/>
<text x="619.5" y="77.9" font-size="11" fill="#ff5252" text-anchor="middle" textLength="33.7" lengthAdjust="spacing">FRED</text>
<rect x="651" y="64" width="63" height="20.6" fill="#f0f3fa" rx="4"/>
<text x="682.4" y="79" font-size="11.4" fill="#687093" text-anchor="middle" textLength="49.2" lengthAdjust="spacingAndGlyphs" stroke="#687093" stroke-width="0.15">Monthly</text>
<text x="11.7" y="102.85" font-size="13.8" fill="#6b7190" textLength="84.5" lengthAdjust="spacingAndGlyphs">Mar 01, 2026</text>
<text x="11.7" y="126.6" font-size="13.5" font-weight="bold" stroke="#ffffff" stroke-width="0.3" fill="#ffffff" textLength="36.2" lengthAdjust="spacingAndGlyphs">Close</text>
<text x="57.2" y="126.6" font-size="13.5" font-weight="bold" stroke="#ffffff" stroke-width="0.3" fill="#ffffff" textLength="30.8" lengthAdjust="spacingAndGlyphs">3.00</text>
<text x="11.7" y="151.5" font-size="13.5" font-weight="bold" stroke="#ffffff" stroke-width="0.3" fill="#ffffff" textLength="50.4" lengthAdjust="spacingAndGlyphs">Change</text>
<text x="71.1" y="151.5" font-size="13.5" font-weight="bold" stroke="#f7525f" stroke-width="0.3" fill="#f7525f" textLength="92.6" lengthAdjust="spacingAndGlyphs">-0.12 (-3.85%)</text>
<text x="11.7" y="177.6" font-size="13.8" font-weight="bold" fill="#10162b" textLength="71" lengthAdjust="spacingAndGlyphs">Propulsion</text>
<text x="11.7" y="206.9" font-size="13.8" font-weight="bold" fill="#10162b" textLength="70" lengthAdjust="spacingAndGlyphs">Sequential</text>
<text x="11.7" y="235.7" font-size="13.8" font-weight="bold" fill="#10162b" textLength="48" lengthAdjust="spacingAndGlyphs">Combo</text>
<text x="11.7" y="263.8" font-size="13.8" font-weight="bold" fill="#10162b" textLength="52.6" lengthAdjust="spacingAndGlyphs">D-Wave</text>
<text x="11.7" y="293" font-size="13.8" font-weight="bold" fill="#10162b" textLength="44" lengthAdjust="spacingAndGlyphs">Ellipse</text>
<text x="11.7" y="320.6" font-size="13.8" font-weight="bold" fill="#10162b" textLength="66" lengthAdjust="spacingAndGlyphs">Ellipse (2)</text>
<text x="11.7" y="349.4" font-size="13.8" font-weight="bold" fill="#10162b" textLength="66" lengthAdjust="spacingAndGlyphs">Ellipse (3)</text>
<text x="11.7" y="377.6" font-size="13.8" font-weight="bold" fill="#10162b" textLength="66.5" lengthAdjust="spacingAndGlyphs">Ellipse (4)</text>
<text x="11.7" y="406.4" font-size="13.8" font-weight="bold" fill="#10162b" textLength="66" lengthAdjust="spacingAndGlyphs">Ellipse (5)</text>
<text x="11.5" y="652" font-size="13.5" font-weight="bold" stroke="#ffffff" stroke-width="0.3" fill="#ffffff" textLength="33.5" lengthAdjust="spacingAndGlyphs">QQE</text>
<line x1="0" y1="669.2" x2="1773" y2="669.2" stroke="#730b21" stroke-width="2.0"/>
<line x1="0" y1="780.45" x2="1773" y2="780.45" stroke="#30bb30" stroke-width="1.35"/>
<polyline points="78.4,654.4 82.2,656.1 86.0,661.5 90.8,667.2 94.7,673.9 98.5,679.7 102.3,682.0 107.1,686.4 111.9,686.8 123.4,686.8 127.2,688.9 131.4,690.2 143.5,690.2 145.4,696.9 147.9,703.2 151.1,699.8 155.0,696.0 159.7,691.6 163.6,686.4 167.4,677.8 171.2,668.2 174.1,662.5 176.6,658.6 180.4,658.2 182.3,649.1 184.2,641.4 188.5,645.2 192.3,649.1 196.1,655.8 199.9,657.3 204.7,658.1 209.1,660.9 220.0,661.1 222.5,665.3 225.8,672.0 229.6,678.2 232.9,680.1 237.3,690.2 241.1,697.3 245.9,699.8 258.3,699.8 260.2,710.3 262.2,719.5 266.0,713.8 278.4,713.8 280.0,700.7 282.3,689.3 286.1,696.0 289.9,705.5 294.1,710.3 298.5,717.0 302.9,722.8 306.8,727.5 311.0,731.4 315.8,737.1 320.5,742.5 324.4,746.7 327.2,749.2 335.9,749.0 339.3,749.9 359.1,749.9 363.9,752.0 367.8,755.9 372.2,759.7 376.0,759.7 380.2,762.0 388.8,762.0 390.7,769.7 392.6,774.4 396.5,771.2 401.3,771.2 406.0,770.6 411.8,769.1 416.6,766.8 421.4,764.5 450.1,764.5 453.9,762.6 458.3,760.7 477.8,760.7 479.7,753.4 482.0,746.1 486.4,748.6 490.8,752.8 498.9,752.8 500.8,744.8 502.7,735.2 506.5,729.5 510.4,723.7 513.2,714.1 517.1,704.6 520.9,695.0 524.7,686.4 528.6,678.2 531.4,673.4 556.3,673.4 559.8,671.6 562.1,665.3 564.4,660.9 580.2,660.9 582.2,651.9 584.4,642.4 586.9,651.0 589.8,660.5 592.7,670.1 596.5,680.6 600.3,688.3 604.2,696.0 608.0,701.7 612.8,706.5 616.6,711.7 621.0,715.1 625.2,717.0 629.1,720.3 633.3,723.1 666.3,723.1 670.5,727.0 674.4,730.4 678.2,733.3 682.6,735.2 698.3,735.2 700.6,742.9 702.5,748.0 706.9,746.3 710.7,742.3 714.6,741.5 759.5,741.5 761.5,732.3 763.8,723.1 768.2,727.5 772.0,729.8 775.8,732.7 780.6,737.5 784.4,739.6 804.5,739.6 809.3,740.9 813.1,744.2 817.0,744.2 821.8,747.6 825.6,749.9 829.4,752.0 833.2,754.0 837.6,756.6 845.3,756.6 847.2,760.1 849.5,765.4 853.3,760.5 855.3,757.2 859.1,749.6 862.9,740.9 865.8,735.2 886.3,735.2 889.7,732.3 892.6,727.5 895.5,720.8 898.7,713.2 902.7,713.2 906.9,711.3 910.8,706.5 914.6,699.8 918.8,694.4 927.0,694.4 928.9,688.3 930.9,682.9 935.1,687.0 939.1,693.1 943.3,701.7 947.1,708.4 951.9,714.1 955.8,718.9 959.6,724.7 963.4,730.4 967.8,736.2 972.0,737.7 975.8,739.4 979.7,740.9 983.8,741.5 988.0,743.4 1008.7,743.8 1012.9,745.7 1049.9,745.7 1051.8,748.6 1053.7,752.0 1055.6,744.8 1057.5,733.9 1115.0,733.9 1116.9,723.7 1118.8,713.2 1122.6,706.1 1135.1,706.1 1137.0,698.8 1138.9,692.1 1143.7,694.0 1147.5,696.0 1151.3,702.7 1155.2,709.4 1159.0,713.8 1163.4,718.4 1167.6,722.4 1171.4,725.1 1175.6,727.2 1180.0,730.4 1188.7,730.4 1192.9,731.4 1196.3,731.9 1220.8,731.9 1223.1,739.0 1225.0,744.8 1227.3,737.1 1229.2,730.0 1233.1,729.5 1237.5,727.2 1241.3,723.3 1274.4,723.3 1276.3,714.1 1277.9,706.9 1282.5,712.2 1286.3,715.5 1290.1,716.1 1298.4,716.4 1302.6,721.3 1306.8,722.7 1310.9,726.3 1315.1,729.6 1319.3,731.7 1323.5,733.1 1327.7,733.7 1331.3,733.7 1335.5,734.9 1339.7,737.3 1343.8,740.7 1347.4,743.9 1351.6,743.9 1355.6,745.4 1359.8,745.4 1361.8,751.4 1363.6,757.4 1365.6,751.4 1367.8,744.5 1371.7,744.0 1412.7,744.0" fill="none" stroke="#ec9a08" stroke-width="2.25" stroke-linejoin="round" stroke-linecap="round"/>
<polyline points="38.2,745.2 41.4,746.3 45.8,741.9 49.7,734.2 54.5,722.8 58.3,716.4 61.2,696.9 64.0,679.7 66.9,665.3 70.2,655.8 74.6,662.5 79.3,666.3 83.2,669.2 87.0,675.9 91.2,681.6 95.0,690.2 98.9,696.0 102.7,698.8 107.1,703.6 110.9,704.2 115.7,702.3 119.2,700.7 123.4,703.0 127.6,707.1 131.4,708.4 135.2,706.5 139.6,698.8 143.5,692.1 147.9,684.5 152.1,679.3 156.3,674.9 160.7,670.5 164.5,665.3 168.4,656.7 172.2,647.1 176.0,639.1 178.9,647.1 181.8,656.7 184.6,662.5 188.5,666.3 192.3,671.1 196.1,677.4 199.9,679.7 204.7,680.6 209.1,683.5 213.0,673.9 217.2,673.9 221.0,683.5 224.8,691.2 229.0,699.2 232.9,703.0 237.3,713.2 241.1,720.8 245.5,723.3 249.7,715.1 253.9,706.5 258.3,700.4 262.2,694.0 266.0,688.9 269.8,696.9 273.6,701.7 277.5,707.4 281.3,713.2 286.1,720.8 289.9,731.4 294.7,737.1 298.5,742.9 302.4,748.6 306.2,753.4 311.0,757.2 315.8,763.0 320.5,768.7 324.4,772.5 327.2,775.0 331.1,774.4 334.9,773.5 339.3,775.0 343.8,771.9 348.6,771.2 355.3,770.6 360.1,771.6 363.9,773.9 367.8,777.3 372.2,780.8 376.0,779.8 380.2,782.1 384.0,775.4 387.9,764.9 391.7,756.3 396.5,752.0 400.9,754.3 405.1,751.5 411.8,749.9 416.6,748.0 421.4,746.1 425.2,747.6 429.0,749.6 433.8,753.4 437.6,756.6 441.5,757.6 445.3,754.3 450.1,749.6 453.9,746.3 457.7,744.8 462.5,746.3 466.3,748.6 470.2,754.3 474.0,759.1 477.8,760.7 482.6,761.4 487.0,763.3 490.8,767.7 494.7,759.1 497.0,746.7 499.8,731.4 502.3,719.9 506.5,712.2 510.4,706.5 513.2,696.9 516.1,689.3 519.9,679.7 523.8,669.2 527.6,660.5 531.4,652.5 535.3,660.5 540.0,670.5 543.9,673.4 547.7,672.0 551.5,669.2 555.4,662.5 559.2,649.1 563.6,635.7 567.8,637.2 572.0,645.2 576.4,649.4 580.2,653.8 583.1,662.5 586.0,673.9 588.9,683.5 592.7,696.0 596.5,708.4 600.3,718.0 604.2,725.6 608.0,731.4 612.8,737.1 616.6,742.5 621.0,746.3 625.2,747.6 629.1,750.9 633.3,754.0 637.7,749.6 641.5,746.7 645.3,746.3 649.7,744.2 653.9,745.7 657.8,747.6 662.9,748.2 667.7,751.5 674.4,756.3 679.1,758.6 682.6,759.7 686.4,758.2 690.6,754.9 694.8,751.5 697.3,744.8 700.2,734.2 703.1,725.6 706.9,724.1 710.7,719.9 715.5,719.5 719.3,722.2 723.2,727.0 727.4,730.8 731.8,732.9 735.6,728.5 739.4,728.1 743.7,729.8 748.1,732.3 751.9,734.8 755.7,737.1 759.5,738.6 763.4,740.9 768.2,746.3 772.0,748.6 775.8,751.1 780.6,755.3 784.4,757.2 788.6,751.9 793.0,752.0 796.9,751.5 800.7,750.1 804.5,752.4 809.3,755.9 813.1,759.5 817.0,759.1 821.8,762.6 825.6,764.7 829.4,766.2 833.2,767.7 837.1,770.2 840.9,763.9 844.7,761.6 847.2,758.2 849.5,751.5 852.4,747.6 855.3,742.9 859.1,734.8 862.9,725.6 865.8,720.5 870.2,724.3 874.0,722.8 878.2,724.3 882.1,725.6 885.9,721.8 889.7,716.1 893.9,708.4 896.4,701.7 898.7,696.9 902.7,698.3 906.9,695.0 910.8,690.2 914.6,682.6 918.8,676.8 923.2,681.6 927.0,692.1 930.9,700.7 935.1,705.1 939.1,712.2 943.3,720.8 947.1,727.5 951.9,733.7 955.8,738.6 959.6,744.8 963.4,750.5 967.8,757.2 972.0,758.7 975.8,760.5 979.7,762.0 983.8,763.0 988.0,764.9 992.4,762.0 996.8,763.3 1000.7,764.3 1004.9,763.0 1008.7,762.0 1012.9,765.3 1016.8,763.5 1020.6,758.7 1025.0,757.6 1029.4,754.0 1033.2,750.5 1037.4,751.5 1041.3,751.5 1045.5,754.3 1048.9,747.6 1051.8,739.0 1054.7,727.5 1057.5,717.0 1061.9,716.6 1065.8,720.8 1070.0,722.8 1073.8,727.0 1078.0,721.2 1082.4,722.8 1086.8,725.1 1091.0,724.7 1094.9,725.2 1099.1,724.1 1102.9,725.1 1106.7,730.4 1111.1,728.1 1114.0,720.8 1116.3,708.4 1118.8,695.0 1122.6,688.9 1127.0,692.1 1131.2,695.0 1135.1,703.6 1138.9,709.7 1143.7,713.2 1147.5,715.1 1151.3,720.8 1155.2,727.2 1159.0,731.9 1163.4,737.1 1167.6,741.9 1171.4,745.2 1175.6,747.1 1180.0,750.1 1184.4,749.0 1188.7,749.2 1192.9,750.5 1196.3,750.9 1200.1,745.2 1204.4,746.7 1208.8,741.9 1212.6,737.7 1217.0,737.5 1220.8,732.9 1225.0,726.6 1227.3,718.9 1229.2,712.2 1233.1,711.7 1237.5,709.7 1241.3,705.9 1245.7,709.9 1249.5,713.2 1253.7,713.8 1257.6,717.6 1261.4,720.8 1266.2,720.5 1270.0,720.5 1274.4,719.3 1278.6,724.7 1282.5,729.5 1286.3,731.9 1290.1,731.9 1294.2,727.7 1298.4,730.7 1302.6,736.5 1306.8,738.0 1310.9,741.5 1315.1,744.8 1319.3,746.6 1323.5,747.6 1327.7,748.1 1331.3,747.8 1335.5,748.8 1339.7,751.2 1343.8,754.4 1347.4,757.4 1351.6,756.2 1355.6,758.6 1359.8,756.2 1361.8,750.2 1364.8,740.7 1367.8,731.3 1371.7,730.8 1375.6,734.1 1379.7,737.4 1383.9,740.4 1388.1,742.8 1392.3,741.8 1396.5,741.5 1400.7,743.0 1404.6,742.8 1408.5,737.7 1412.7,736.5" fill="none" stroke="#2196fb" stroke-width="2.25" stroke-linejoin="round" stroke-linecap="round"/>
<rect x="0" y="621" width="1773" height="4.8" fill="#ffffff"/>
<rect x="1773" y="621" width="60" height="1" fill="#d9dcea"/>
<rect x="1773" y="625" width="60" height="1" fill="#d9dcea"/>
<rect x="1773" y="49" width="1" height="572" fill="#d9dcea"/>
<rect x="1773" y="626" width="1" height="200" fill="#d9dcea"/>
<rect x="1833" y="48" width="1" height="779" fill="#e4e7f1"/>
<rect x="0" y="826" width="1834" height="1" fill="#e4e7f1"/>
<rect x="0" y="792" width="1833" height="1" fill="#d9dcea"/>
<text x="1782.3" y="76.10000000000001" font-size="14.2" font-weight="bold" stroke="#ffffff" stroke-width="0.3" fill="#ffffff" textLength="38.5" lengthAdjust="spacingAndGlyphs">22.00</text>
<text x="1782.3" y="122.10000000000001" font-size="14.2" font-weight="bold" stroke="#ffffff" stroke-width="0.3" fill="#ffffff" textLength="40.5" lengthAdjust="spacingAndGlyphs">20.00</text>
<text x="1782.3" y="168.1" font-size="14.2" font-weight="bold" stroke="#ffffff" stroke-width="0.3" fill="#ffffff" textLength="37" lengthAdjust="spacingAndGlyphs">18.00</text>
<text x="1782.3" y="214.1" font-size="14.2" font-weight="bold" stroke="#ffffff" stroke-width="0.3" fill="#ffffff" textLength="36.7" lengthAdjust="spacingAndGlyphs">16.00</text>
<text x="1782.3" y="260.09999999999997" font-size="14.2" font-weight="bold" stroke="#ffffff" stroke-width="0.3" fill="#ffffff" textLength="36.7" lengthAdjust="spacingAndGlyphs">14.00</text>
<text x="1782.3" y="306.09999999999997" font-size="14.2" font-weight="bold" stroke="#ffffff" stroke-width="0.3" fill="#ffffff" textLength="36.5" lengthAdjust="spacingAndGlyphs">12.00</text>
<text x="1782.3" y="352.09999999999997" font-size="14.2" font-weight="bold" stroke="#ffffff" stroke-width="0.3" fill="#ffffff" textLength="38.2" lengthAdjust="spacingAndGlyphs">10.00</text>
<text x="1782.3" y="398.09999999999997" font-size="14.2" font-weight="bold" stroke="#ffffff" stroke-width="0.3" fill="#ffffff" textLength="30.5" lengthAdjust="spacingAndGlyphs">8.00</text>
<text x="1782.3" y="444.09999999999997" font-size="14.2" font-weight="bold" stroke="#ffffff" stroke-width="0.3" fill="#ffffff" textLength="30.5" lengthAdjust="spacingAndGlyphs">6.00</text>
<text x="1782.3" y="490.09999999999997" font-size="14.2" font-weight="bold" stroke="#ffffff" stroke-width="0.3" fill="#ffffff" textLength="30.5" lengthAdjust="spacingAndGlyphs">4.00</text>
<text x="1782.3" y="536.1" font-size="14.2" font-weight="bold" stroke="#ffffff" stroke-width="0.3" fill="#ffffff" textLength="30" lengthAdjust="spacingAndGlyphs">2.00</text>
<text x="1782.3" y="582.1" font-size="14.2" font-weight="bold" stroke="#ffffff" stroke-width="0.3" fill="#ffffff" textLength="32" lengthAdjust="spacingAndGlyphs">0.00</text>
<rect x="1774" y="319.5" width="59" height="18.0" fill="#c71585"/>
<text x="1782.3" y="333.4" font-size="14.2" font-weight="bold" stroke="#ffffff" stroke-width="0.3" fill="#ffffff" textLength="35" lengthAdjust="spacingAndGlyphs">10.85</text>
<rect x="1774" y="420.8" width="59" height="17.899999999999977" fill="#9d7bd8"/>
<text x="1782.3" y="434.65" font-size="14.2" font-weight="bold" stroke="#ffffff" stroke-width="0.3" fill="#ffffff" textLength="28.7" lengthAdjust="spacingAndGlyphs">6.44</text>
<rect x="1774" y="444.3" width="59" height="17.899999999999977" fill="#dc143c"/>
<text x="1782.3" y="458.15" font-size="14.2" font-weight="bold" stroke="#ffffff" stroke-width="0.3" fill="#ffffff" textLength="28.3" lengthAdjust="spacingAndGlyphs">5.43</text>
<rect x="1774" y="481.5" width="59" height="3.0" fill="#dc143c"/>
<rect x="1774" y="463.9" width="59" height="18.0" fill="#9d7bd8"/>
<text x="1782.3" y="477.2" font-size="14.2" font-weight="bold" stroke="#ffffff" stroke-width="0.3" fill="#ffffff" textLength="28.7" lengthAdjust="spacingAndGlyphs">4.58</text>
<rect x="1774" y="484.3" width="59" height="16.19999999999999" fill="#32cd32"/>
<text x="1782.3" y="497.29999999999995" font-size="14.2" font-weight="bold" stroke="#ffffff" stroke-width="0.3" fill="#ffffff" textLength="28.3" lengthAdjust="spacingAndGlyphs">3.68</text>
<rect x="1774" y="512.5" width="59" height="18.5" fill="#c71585"/>
<text x="1782.3" y="526.1999999999999" font-size="14.2" font-weight="bold" stroke="#ffffff" stroke-width="0.3" fill="#ffffff" textLength="29.5" lengthAdjust="spacingAndGlyphs">2.44</text>
<rect x="1774" y="500.5" width="59" height="17.799999999999955" fill="#ffffff"/>
<rect x="1774" y="558.5" width="59" height="18.5" fill="#32cd32"/>
<text x="1782.3" y="571.9" font-size="14.2" font-weight="bold" stroke="#ffffff" stroke-width="0.3" fill="#ffffff" textLength="29.5" lengthAdjust="spacingAndGlyphs">0.47</text>
<rect x="1774" y="578.4" width="59" height="18.399999999999977" fill="#008080"/>
<text x="1782.3" y="591.6" font-size="14.2" font-weight="bold" stroke="#ffffff" stroke-width="0.3" fill="#ffffff" textLength="36.5" lengthAdjust="spacingAndGlyphs">-0.40</text>
<text x="1782.3" y="646.4" font-size="14.2" font-weight="bold" stroke="#ffffff" stroke-width="0.3" fill="#ffffff" textLength="40.5" lengthAdjust="spacingAndGlyphs">80.00</text>
<text x="1782.3" y="701.9" font-size="14.2" font-weight="bold" stroke="#ffffff" stroke-width="0.3" fill="#ffffff" textLength="40.5" lengthAdjust="spacingAndGlyphs">60.00</text>
<text x="1782.3" y="729.4" font-size="14.2" font-weight="bold" stroke="#ffffff" stroke-width="0.3" fill="#ffffff" textLength="40.5" lengthAdjust="spacingAndGlyphs">50.00</text>
<text x="1782.3" y="757.4" font-size="14.2" font-weight="bold" stroke="#ffffff" stroke-width="0.3" fill="#ffffff" textLength="40.5" lengthAdjust="spacingAndGlyphs">40.00</text>
<rect x="1774" y="660.2" width="59" height="18.0" fill="#dc143c"/>
<text x="1782.3" y="674.1" font-size="14.2" font-weight="bold" stroke="#ffffff" stroke-width="0.3" fill="#ffffff" textLength="39.5" lengthAdjust="spacingAndGlyphs">70.00</text>
<rect x="1774" y="728" width="59" height="9" fill="#2196f3"/>
<text x="1782.3" y="740.4" font-size="14.2" font-weight="bold" stroke="#ffffff" stroke-width="0.3" fill="#ffffff" textLength="35" lengthAdjust="spacingAndGlyphs">45.71</text>
<rect x="1774" y="736.4" width="59" height="17.600000000000023" fill="#ffa113"/>
<text x="1782.3" y="750.1" font-size="14.2" font-weight="bold" stroke="#ffffff" stroke-width="0.3" fill="#ffffff" textLength="36.5" lengthAdjust="spacingAndGlyphs">42.99</text>
<rect x="1774" y="772.3" width="59" height="18.40000000000009" fill="#32cd32"/>
<text x="1782.3" y="786.4" font-size="14.2" font-weight="bold" stroke="#ffffff" stroke-width="0.3" fill="#ffffff" textLength="39.5" lengthAdjust="spacingAndGlyphs">30.00</text>
<text x="131.2" y="813.1" font-size="14.2" font-weight="bold" stroke="#ffffff" stroke-width="0.3" fill="#ffffff" text-anchor="middle" textLength="37.2" lengthAdjust="spacingAndGlyphs">2000</text>
<text x="180.16" y="813.1" font-size="14.2" font-weight="bold" stroke="#ffffff" stroke-width="0.3" fill="#ffffff" text-anchor="middle" textLength="33" lengthAdjust="spacingAndGlyphs">2001</text>
<text x="278.08" y="813.1" font-size="14.2" font-weight="bold" stroke="#ffffff" stroke-width="0.3" fill="#ffffff" text-anchor="middle" textLength="35.5" lengthAdjust="spacingAndGlyphs">2003</text>
<text x="376.0" y="813.1" font-size="14.2" font-weight="bold" stroke="#ffffff" stroke-width="0.3" fill="#ffffff" text-anchor="middle" textLength="36" lengthAdjust="spacingAndGlyphs">2005</text>
<text x="473.92" y="813.1" font-size="14.2" font-weight="bold" stroke="#ffffff" stroke-width="0.3" fill="#ffffff" text-anchor="middle" textLength="34.6" lengthAdjust="spacingAndGlyphs">2007</text>
<text x="571.8399999999999" y="813.1" font-size="14.2" font-weight="bold" stroke="#ffffff" stroke-width="0.3" fill="#ffffff" text-anchor="middle" textLength="35.8" lengthAdjust="spacingAndGlyphs">2009</text>
<text x="620.8" y="813.1" font-size="14.2" font-weight="bold" stroke="#ffffff" stroke-width="0.3" fill="#ffffff" text-anchor="middle" textLength="32.8" lengthAdjust="spacingAndGlyphs">2010</text>
<text x="669.76" y="813.1" font-size="14.2" font-weight="bold" stroke="#ffffff" stroke-width="0.3" fill="#ffffff" text-anchor="middle" textLength="29.5" lengthAdjust="spacingAndGlyphs">2011</text>
<text x="718.72" y="813.1" font-size="14.2" font-weight="bold" stroke="#ffffff" stroke-width="0.3" fill="#ffffff" text-anchor="middle" textLength="31.6" lengthAdjust="spacingAndGlyphs">2012</text>
<text x="767.6800000000001" y="813.1" font-size="14.2" font-weight="bold" stroke="#ffffff" stroke-width="0.3" fill="#ffffff" text-anchor="middle" textLength="31.6" lengthAdjust="spacingAndGlyphs">2013</text>
<text x="816.6400000000001" y="813.1" font-size="14.2" font-weight="bold" stroke="#ffffff" stroke-width="0.3" fill="#ffffff" text-anchor="middle" textLength="32" lengthAdjust="spacingAndGlyphs">2014</text>
<text x="865.5999999999999" y="813.1" font-size="14.2" font-weight="bold" stroke="#ffffff" stroke-width="0.3" fill="#ffffff" text-anchor="middle" textLength="31.8" lengthAdjust="spacingAndGlyphs">2015</text>
<text x="914.56" y="813.1" font-size="14.2" font-weight="bold" stroke="#ffffff" stroke-width="0.3" fill="#ffffff" text-anchor="middle" textLength="31.8" lengthAdjust="spacingAndGlyphs">2016</text>
<text x="963.52" y="813.1" font-size="14.2" font-weight="bold" stroke="#ffffff" stroke-width="0.3" fill="#ffffff" text-anchor="middle" textLength="31.2" lengthAdjust="spacingAndGlyphs">2017</text>
<text x="1012.48" y="813.1" font-size="14.2" font-weight="bold" stroke="#ffffff" stroke-width="0.3" fill="#ffffff" text-anchor="middle" textLength="31.8" lengthAdjust="spacingAndGlyphs">2018</text>
<text x="1110.4" y="813.1" font-size="14.2" font-weight="bold" stroke="#ffffff" stroke-width="0.3" fill="#ffffff" text-anchor="middle" textLength="35" lengthAdjust="spacingAndGlyphs">2020</text>
<text x="1208.3200000000002" y="813.1" font-size="14.2" font-weight="bold" stroke="#ffffff" stroke-width="0.3" fill="#ffffff" text-anchor="middle" textLength="34" lengthAdjust="spacingAndGlyphs">2022</text>
<text x="1306.24" y="813.1" font-size="14.2" font-weight="bold" stroke="#ffffff" stroke-width="0.3" fill="#ffffff" text-anchor="middle" textLength="34.3" lengthAdjust="spacingAndGlyphs">2024</text>
<text x="1404.16" y="813.1" font-size="14.2" font-weight="bold" stroke="#ffffff" stroke-width="0.3" fill="#ffffff" text-anchor="middle" textLength="34" lengthAdjust="spacingAndGlyphs">2026</text>
<text x="1453.1200000000001" y="813.1" font-size="14.2" font-weight="bold" stroke="#ffffff" stroke-width="0.3" fill="#ffffff" text-anchor="middle" textLength="33.7" lengthAdjust="spacingAndGlyphs">2027</text>
<text x="1551.04" y="813.1" font-size="14.2" font-weight="bold" stroke="#ffffff" stroke-width="0.3" fill="#ffffff" text-anchor="middle" textLength="33.7" lengthAdjust="spacingAndGlyphs">2029</text>
<text x="1645" y="813.1" font-size="14.2" font-weight="bold" stroke="#ffffff" stroke-width="0.3" fill="#ffffff" text-anchor="middle" textLength="31.4" lengthAdjust="spacingAndGlyphs">2031</text>
<text x="1743" y="813.1" font-size="14.2" font-weight="bold" stroke="#ffffff" stroke-width="0.3" fill="#ffffff" text-anchor="middle" textLength="33.7" lengthAdjust="spacingAndGlyphs">2033</text>
<rect x="-0.6" y="793.4" width="30.9" height="32.6" fill="#ffffff" rx="7"/>
<rect x="32" y="793.4" width="32" height="32.6" fill="#ffffff" rx="7"/>
<g fill="none" stroke="#131722" stroke-width="1.2" stroke-linecap="round" stroke-linejoin="round"><path d="M11.5,802.5 L14.3,800 L17.1,802.5 M11.5,816 L14.3,818.6 L17.1,816 M7.3,806.5 L4.6,809.3 L7.3,812 M21.2,806.5 L24,809.3 L21.2,812"/></g><circle cx="14.3" cy="809.3" r="2.4" fill="#131722"/>
<g fill="none" stroke="#131722" stroke-width="1.2" stroke-linecap="round"><rect x="37.6" y="801.8" width="19" height="17.2" rx="2.6"/><path d="M43,799.5 V803.5 M51.5,799.5 V803.5 M42.5,807.5 H52"/></g>
<rect x="1778.3" y="797.6" width="50.4" height="24.2" fill="#ffffff" rx="4"/>
<circle cx="1798.8" cy="809.8" r="1.2" fill="#131722"/>
<circle cx="1803.6" cy="809.8" r="1.2" fill="#131722"/>
<circle cx="1808.4" cy="809.8" r="1.2" fill="#131722"/>
</svg>
</body></html>
